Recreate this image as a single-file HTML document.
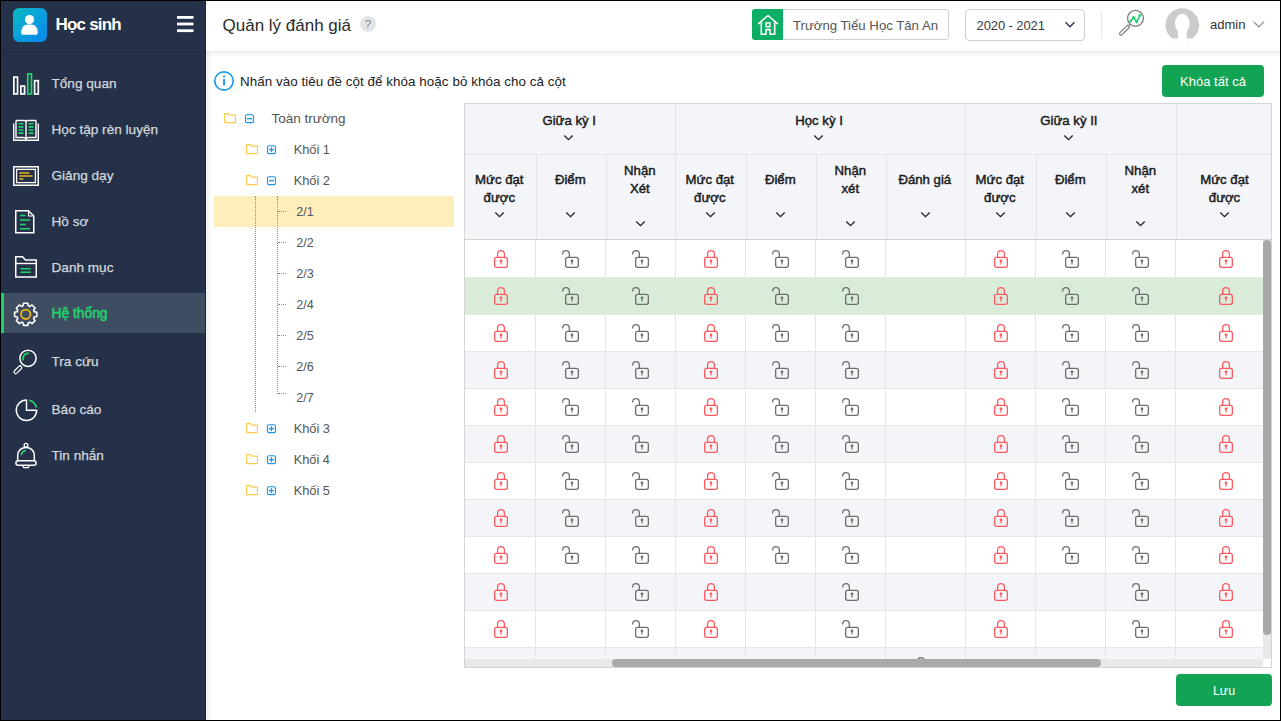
<!DOCTYPE html>
<html><head><meta charset="utf-8"><title>Quản lý đánh giá</title>
<style>
html,body{margin:0;padding:0;}
body{width:1281px;height:721px;background:#000;position:relative;overflow:hidden;font-family:"Liberation Sans", sans-serif;}
svg{display:block;overflow:visible;}
</style></head><body>
<div style="position:absolute;left:1px;top:1px;width:205px;height:719px;background:#243148;"></div>
<div style="position:absolute;left:205px;top:1px;width:1px;height:719px;background:#1b263a;"></div>
<div style="position:absolute;left:1px;top:51px;width:204px;height:2px;background:linear-gradient(#202c42,#243148);"></div>
<div style="position:absolute;left:13px;top:8px;width:34px;height:34px;border-radius:6px;background:linear-gradient(135deg,#0bb8bf 0%,#0a9ee0 55%,#0a85ea 100%);"></div>
<svg style="position:absolute;left:13px;top:8px;" width="34" height="34" viewBox="0 0 34 34"><circle cx="16.5" cy="11.6" r="4.6" fill="#fff"/><path d="M8.2 24.5 C8.2 19.5 11 16.8 14.5 16.6 L18.5 16.6 C22 16.8 24.8 19.5 24.8 24.5 C24.8 26.2 24 26.8 22.5 26.8 L10.5 26.8 C9 26.8 8.2 26.2 8.2 24.5 Z" fill="#fff"/></svg>
<div style="position:absolute;top:16.00px;font-size:17px;line-height:17px;color:#fff;font-weight:700;white-space:nowrap;letter-spacing:-0.8px;left:55.50px;">Học sinh</div>
<svg style="position:absolute;left:176px;top:15px;" width="19" height="19" viewBox="0 0 19 19"><rect x="1" y="1" width="16.5" height="2.8" fill="#fff"/><rect x="1" y="7.6" width="16.5" height="2.8" fill="#fff"/><rect x="1" y="14.3" width="16.5" height="2.8" fill="#fff"/></svg>
<div style="position:absolute;left:1px;top:293px;width:204px;height:40px;background:#3f4d63;"></div>
<div style="position:absolute;left:1px;top:293px;width:3px;height:40px;background:#1fd36b;"></div>
<div style="position:absolute;top:77.00px;font-size:13.6px;line-height:13.6px;color:#d3d7de;font-weight:400;white-space:nowrap;left:51.50px;-webkit-text-stroke:0.25px #d3d7de;">Tổng quan</div>
<div style="position:absolute;top:123.00px;font-size:13.6px;line-height:13.6px;color:#d3d7de;font-weight:400;white-space:nowrap;left:51.50px;-webkit-text-stroke:0.25px #d3d7de;">Học tập rèn luyện</div>
<div style="position:absolute;top:169.00px;font-size:13.6px;line-height:13.6px;color:#d3d7de;font-weight:400;white-space:nowrap;left:51.50px;-webkit-text-stroke:0.25px #d3d7de;">Giảng dạy</div>
<div style="position:absolute;top:215.00px;font-size:13.6px;line-height:13.6px;color:#d3d7de;font-weight:400;white-space:nowrap;left:51.50px;-webkit-text-stroke:0.25px #d3d7de;">Hồ sơ</div>
<div style="position:absolute;top:261.00px;font-size:13.6px;line-height:13.6px;color:#d3d7de;font-weight:400;white-space:nowrap;left:51.50px;-webkit-text-stroke:0.25px #d3d7de;">Danh mục</div>
<div style="position:absolute;top:307.00px;font-size:13.8px;line-height:13.8px;color:#22d36c;font-weight:400;white-space:nowrap;left:51.50px;-webkit-text-stroke:0.5px #22d36c;">Hệ thống</div>
<div style="position:absolute;top:355.00px;font-size:13.6px;line-height:13.6px;color:#d3d7de;font-weight:400;white-space:nowrap;left:51.50px;-webkit-text-stroke:0.25px #d3d7de;">Tra cứu</div>
<div style="position:absolute;top:403.00px;font-size:13.6px;line-height:13.6px;color:#d3d7de;font-weight:400;white-space:nowrap;left:51.50px;-webkit-text-stroke:0.25px #d3d7de;">Báo cáo</div>
<div style="position:absolute;top:449.00px;font-size:13.6px;line-height:13.6px;color:#d3d7de;font-weight:400;white-space:nowrap;left:51.50px;-webkit-text-stroke:0.25px #d3d7de;">Tin nhắn</div>
<svg style="position:absolute;left:12px;top:72px;" width="28" height="24" viewBox="0 0 28 24">
<rect x="1.85" y="5.1" width="3.7" height="16.85" fill="none" stroke="#fff" stroke-width="1.7"/>
<rect x="8.85" y="14.1" width="3.7" height="7.85" fill="none" stroke="#fff" stroke-width="1.7"/>
<rect x="15.75" y="1.9" width="3.7" height="20.05" fill="none" stroke="#1fd36b" stroke-width="1.7"/>
<rect x="22.6" y="8.7" width="3.7" height="13.25" fill="none" stroke="#fff" stroke-width="1.7"/></svg>
<svg style="position:absolute;left:12px;top:118px;" width="28" height="24" viewBox="0 0 28 24">
<path d="M4 2.5 H12.5 C13.5 2.5 14 3 14 4 V20 M24 2.5 H15.5 C14.5 2.5 14 3 14 4" fill="none" stroke="#fff" stroke-width="1.4"/>
<path d="M4 2.5 V19.5 H11 C12.5 19.5 13.5 20 14 21 C14.5 20 15.5 19.5 17 19.5 H24 V2.5" fill="none" stroke="#fff" stroke-width="1.4"/>
<path d="M1.7 5.5 V22.2 H26.3 V5.5" fill="none" stroke="#fff" stroke-width="1.4"/>
<path d="M6.5 5.8 H11.5 M6.5 8.9 H11.5 M6.5 12 H11.5 M6.5 15.1 H11.5 M16.5 5.8 H21.5 M16.5 8.9 H21.5 M16.5 12 H21.5 M16.5 15.1 H21.5" stroke="#1fd36b" stroke-width="1.6"/></svg>
<svg style="position:absolute;left:12px;top:165px;" width="28" height="22" viewBox="0 0 28 22">
<rect x="1.75" y="1.75" width="24.5" height="18.5" fill="none" stroke="#fff" stroke-width="1.5"/>
<rect x="4.6" y="4.4" width="18.8" height="13.2" fill="none" stroke="#fff" stroke-width="1.3"/>
<path d="M7.3 8 H17.4 M7.3 11 H20.6 M7.3 14 H11.4" stroke="#ebb318" stroke-width="1.7"/></svg>
<svg style="position:absolute;left:14px;top:209px;" width="22" height="26" viewBox="0 0 22 26">
<path d="M1.75 1.75 H14.5 L19.75 7 V23.75 H1.75 Z" fill="none" stroke="#fff" stroke-width="1.5"/>
<path d="M14.5 1.75 V7 H19.75" fill="none" stroke="#fff" stroke-width="1.2"/>
<path d="M6 6.4 H11.6 M6 11 H16 M6 15.4 H11.6 M6 19.75 H16" stroke="#1fd36b" stroke-width="1.5"/></svg>
<svg style="position:absolute;left:14px;top:255px;" width="24" height="24" viewBox="0 0 24 24">
<path d="M1.75 21.9 V1.75 H8.5 L11.5 5 H22.25 V21.9 Z" fill="none" stroke="#fff" stroke-width="1.5"/>
<path d="M1.75 8.5 H22.25" stroke="#fff" stroke-width="1.4"/>
<path d="M6.5 13.7 H16.8 M6.5 17.3 H16.8" stroke="#1fd36b" stroke-width="1.5"/></svg>
<svg style="position:absolute;left:12px;top:301px;" width="28" height="28" viewBox="0 0 28 28">
<path d="M11.02 4.81 L11.58 2.20 L15.82 2.20 L16.38 4.81 L17.80 5.40 L20.05 3.95 L23.05 6.95 L21.60 9.20 L22.19 10.62 L24.80 11.18 L24.80 15.42 L22.19 15.98 L21.60 17.40 L23.05 19.65 L20.05 22.65 L17.80 21.20 L16.38 21.79 L15.82 24.40 L11.58 24.40 L11.02 21.79 L9.60 21.20 L7.35 22.65 L4.35 19.65 L5.80 17.40 L5.21 15.98 L2.60 15.42 L2.60 11.18 L5.21 10.62 L5.80 9.20 L4.35 6.95 L7.35 3.95 L9.60 5.40 Z" fill="none" stroke="#fff" stroke-width="1.6" stroke-linejoin="round"/>
<circle cx="13.7" cy="13.3" r="4.7" fill="none" stroke="#f0b70f" stroke-width="1.8"/></svg>
<svg style="position:absolute;left:12px;top:346px;" width="28" height="30" viewBox="0 0 28 30">
<circle cx="16" cy="12.3" r="8.1" fill="none" stroke="#fff" stroke-width="1.5"/>
<path d="M11.43 14.33 A5 5 0 0 1 16.87 7.38" fill="none" stroke="#1fd36b" stroke-width="1.8"/>
<rect x="1.1" y="22.05" width="9.6" height="3.4" rx="1.7" transform="rotate(-45 5.9 23.75)" fill="none" stroke="#fff" stroke-width="1.2"/></svg>
<svg style="position:absolute;left:12px;top:396px;" width="28" height="28" viewBox="0 0 28 28">
<path d="M14.5 4 A10.2 10.2 0 1 0 24.7 14.2 H14.5 Z" fill="none" stroke="#fff" stroke-width="1.5" stroke-linejoin="round"/>
<path d="M17.2 4.3 A10.2 10.2 0 0 1 24.4 11.5" fill="none" stroke="#1fd36b" stroke-width="1.7"/></svg>
<svg style="position:absolute;left:12px;top:442px;" width="28" height="28" viewBox="0 0 28 28">
<circle cx="14" cy="3.2" r="1.9" fill="none" stroke="#fff" stroke-width="1.3"/>
<path d="M5.7 18.6 V13.5 C5.7 8.7 9.3 5.4 14 5.4 C18.7 5.4 22.3 8.7 22.3 13.5 V18.6" fill="none" stroke="#fff" stroke-width="1.5"/>
<rect x="3.9" y="18.7" width="20.2" height="4.5" rx="2.25" fill="none" stroke="#fff" stroke-width="1.5"/>
<path d="M11.2 23.4 V24.4 C11.2 25.1 11.6 25.6 12.3 25.6 H15.7 C16.4 25.6 16.8 25.1 16.8 24.4 V23.4" fill="none" stroke="#fff" stroke-width="1.3"/>
<path d="M9.3 13.2 A5.5 5.5 0 0 1 13.8 8.4" fill="none" stroke="#1fd36b" stroke-width="1.7"/></svg>
<div style="position:absolute;left:206px;top:1px;width:1074px;height:50px;background:#fff;"></div>
<div style="position:absolute;top:17.00px;font-size:17px;line-height:17px;color:#2b2b2b;font-weight:400;white-space:nowrap;left:222.50px;">Quản lý đánh giá</div>
<div style="position:absolute;left:360px;top:16px;width:16px;height:16px;border-radius:50%;background:#e4e4e4;"></div>
<div style="position:absolute;top:19.00px;font-size:11.5px;line-height:11.5px;color:#808080;font-weight:400;white-space:nowrap;left:268.00px;width:200px;text-align:center;">?</div>
<div style="position:absolute;left:752px;top:9px;width:195px;height:29px;border:1px solid #cfcfcf;border-radius:3px;background:#fff;"></div>
<div style="position:absolute;left:752px;top:9px;width:31px;height:31px;border-radius:3px 0 0 3px;background:#0bae64;"></div>
<svg style="position:absolute;left:757px;top:14px;" width="22" height="22" viewBox="0 0 22 22">
<path d="M1.6 9.6 L11 1.5 L20.4 9.6" fill="none" stroke="#fff" stroke-width="1.6" stroke-linejoin="round" stroke-linecap="round"/>
<path d="M4.3 7.6 V20.2 H9 V15.6 H13 V20.2 H17.7 V7.6" fill="none" stroke="#fff" stroke-width="1.6" stroke-linejoin="round"/>
<rect x="9.1" y="8.9" width="3.8" height="3.8" fill="none" stroke="#fff" stroke-width="1.5"/></svg>
<div style="position:absolute;top:19.00px;font-size:13.2px;line-height:13.2px;color:#555;font-weight:400;white-space:nowrap;left:793.00px;">Trường Tiểu Học Tân An</div>
<div style="position:absolute;left:965px;top:9px;width:118px;height:30px;border:1px solid #cfcfcf;border-radius:4px;background:#fff;"></div>
<div style="position:absolute;top:19.00px;font-size:13px;line-height:13px;color:#3a3a3a;font-weight:400;white-space:nowrap;letter-spacing:-0.1px;left:976.50px;">2020 - 2021</div>
<svg style="position:absolute;left:1064px;top:20px;" width="12" height="9" viewBox="0 0 12 9"><path d="M1.5 2.2 L6 6.7 L10.5 2.2" fill="none" stroke="#3b3a58" stroke-width="1.6"/></svg>
<div style="position:absolute;left:1101px;top:12px;width:1px;height:26px;background:#e6e6ef;"></div>
<svg style="position:absolute;left:1117px;top:7px;" width="30" height="30" viewBox="0 0 30 30">
<circle cx="18.5" cy="11.3" r="7.9" fill="none" stroke="#7b7b7b" stroke-width="1.3"/>
<path d="M13.2 17 L11.6 18.6" stroke="#7b7b7b" stroke-width="1.3"/>
<path d="M11.9 19.4 L10.6 18.1 L3 25.7 C2.4 26.3 2.4 27 3 27.5 L3.3 27.8 C3.8 28.3 4.5 28.3 5.1 27.7 L12.7 20.1 Z" fill="none" stroke="#7b7b7b" stroke-width="1.2" stroke-linejoin="round"/>
<path d="M13.7 14.3 L16.6 10.4 L19.7 15 L22.8 8.4" fill="none" stroke="#1fd36b" stroke-width="1.6"/>
<circle cx="13.7" cy="14.3" r="1.3" fill="#1fd36b"/><circle cx="16.6" cy="10.4" r="1.3" fill="#1fd36b"/><circle cx="19.7" cy="15" r="1.3" fill="#1fd36b"/><circle cx="22.8" cy="8.4" r="1.3" fill="#1fd36b"/></svg>
<svg style="position:absolute;left:1165px;top:8px;" width="35" height="35" viewBox="0 0 35 35">
<defs><clipPath id="avc"><circle cx="17.3" cy="17.1" r="16.8"/></clipPath></defs>
<circle cx="17.3" cy="17.1" r="16.6" fill="none" stroke="#f0f0f0" stroke-width="0.6"/>
<g clip-path="url(#avc)">
<rect x="0" y="0" width="35" height="35" fill="#cbcbcb"/>
<ellipse cx="17.3" cy="15.6" rx="7.3" ry="9.9" fill="#fff"/>
<rect x="12.9" y="20" width="8.8" height="16" fill="#fff"/>
<path d="M0 30.6 H35 V35 H0 Z" fill="#fff"/>
<path d="M4.7 27 Q5 30.6 8.8 30.6 H4.7 Z M29.9 27 Q29.6 30.6 25.8 30.6 H29.9 Z" fill="#fff"/>
</g></svg>
<div style="position:absolute;top:18.00px;font-size:13px;line-height:13px;color:#333;font-weight:400;white-space:nowrap;left:1210.00px;">admin</div>
<svg style="position:absolute;left:1252px;top:20px;" width="14" height="9" viewBox="0 0 14 9"><path d="M1.6 1.8 L6.8 6.8 L12 1.8" fill="none" stroke="#9a9a9a" stroke-width="1.2"/></svg>
<div style="position:absolute;left:206px;top:51px;width:1074px;height:669px;background:#fff;"></div>
<div style="position:absolute;left:206px;top:51px;width:1074px;height:6px;background:linear-gradient(rgba(0,0,0,0.075),rgba(0,0,0,0));"></div>
<div style="position:absolute;left:206px;top:51px;width:6px;height:669px;background:linear-gradient(90deg,rgba(0,0,0,0.06),rgba(0,0,0,0));"></div>
<svg style="position:absolute;left:213px;top:70px;" width="22" height="22" viewBox="0 0 22 22">
<circle cx="11" cy="11" r="9.2" fill="none" stroke="#1e9be9" stroke-width="1.7"/>
<rect x="10.1" y="9.2" width="1.9" height="6.2" fill="#1e9be9"/><circle cx="11.05" cy="6.6" r="1.1" fill="#1e9be9"/></svg>
<div style="position:absolute;top:75.00px;font-size:13.4px;line-height:13.4px;color:#222;font-weight:400;white-space:nowrap;letter-spacing:0.05px;left:240.00px;">Nhấn vào tiêu đề cột để khóa hoặc bỏ khóa cho cả cột</div>
<div style="position:absolute;left:1162px;top:65px;width:102px;height:32px;border-radius:4px;background:#12a454;"></div>
<div style="position:absolute;top:75.00px;font-size:13px;line-height:13px;color:#fff;font-weight:400;white-space:nowrap;left:1113.00px;width:200px;text-align:center;">Khóa tất cả</div>
<div style="position:absolute;left:1176px;top:674px;width:96px;height:32px;border-radius:4px;background:#12a454;"></div>
<div style="position:absolute;top:685.00px;font-size:12.4px;line-height:12.4px;color:#fff;font-weight:400;white-space:nowrap;left:1124.00px;width:200px;text-align:center;">Lưu</div>
<div style="position:absolute;left:214px;top:196px;width:240px;height:31px;background:#fdeebb;"></div>
<svg style="position:absolute;left:223px;top:112px;" width="15" height="13" viewBox="0 0 15 13"><path d="M1.5 2.1 C1.5 1.8 1.7 1.6 2 1.6 H5.4 L6.8 3.1 H12 C12.3 3.1 12.5 3.3 12.5 3.6 V10.1 C12.5 10.4 12.3 10.6 12 10.6 H2 C1.7 10.6 1.5 10.4 1.5 10.1 Z" fill="none" stroke="#fcc94f" stroke-width="1.1" stroke-linejoin="round"/></svg>
<svg style="position:absolute;left:244px;top:113px;" width="12" height="12" viewBox="0 0 12 12"><rect x="1.5" y="1.7" width="7.9" height="7.9" rx="1.3" fill="none" stroke="#1e96e6" stroke-width="1.15"/><path d="M2.95 5.65 H7.95" stroke="#1e96e6" stroke-width="1.35"/></svg>
<div style="position:absolute;top:112.00px;font-size:13.5px;line-height:13.5px;color:#555;font-weight:400;white-space:nowrap;left:271.40px;">Toàn trường</div>
<svg style="position:absolute;left:245px;top:143px;" width="15" height="13" viewBox="0 0 15 13"><path d="M1.5 2.1 C1.5 1.8 1.7 1.6 2 1.6 H5.4 L6.8 3.1 H12 C12.3 3.1 12.5 3.3 12.5 3.6 V10.1 C12.5 10.4 12.3 10.6 12 10.6 H2 C1.7 10.6 1.5 10.4 1.5 10.1 Z" fill="none" stroke="#fcc94f" stroke-width="1.1" stroke-linejoin="round"/></svg>
<svg style="position:absolute;left:266px;top:144px;" width="12" height="12" viewBox="0 0 12 12"><rect x="1.5" y="1.7" width="7.9" height="7.9" rx="1.3" fill="none" stroke="#1e96e6" stroke-width="1.15"/><path d="M2.95 5.65 H7.95" stroke="#1e96e6" stroke-width="1.35"/><path d="M5.45 3.15 V8.15" stroke="#1e96e6" stroke-width="1.35"/></svg>
<div style="position:absolute;top:144.00px;font-size:12.8px;line-height:12.8px;color:#555;font-weight:400;white-space:nowrap;left:293.70px;">Khối 1</div>
<svg style="position:absolute;left:245px;top:174px;" width="15" height="13" viewBox="0 0 15 13"><path d="M1.5 2.1 C1.5 1.8 1.7 1.6 2 1.6 H5.4 L6.8 3.1 H12 C12.3 3.1 12.5 3.3 12.5 3.6 V10.1 C12.5 10.4 12.3 10.6 12 10.6 H2 C1.7 10.6 1.5 10.4 1.5 10.1 Z" fill="none" stroke="#fcc94f" stroke-width="1.1" stroke-linejoin="round"/></svg>
<svg style="position:absolute;left:266px;top:175px;" width="12" height="12" viewBox="0 0 12 12"><rect x="1.5" y="1.7" width="7.9" height="7.9" rx="1.3" fill="none" stroke="#1e96e6" stroke-width="1.15"/><path d="M2.95 5.65 H7.95" stroke="#1e96e6" stroke-width="1.35"/></svg>
<div style="position:absolute;top:175.00px;font-size:12.8px;line-height:12.8px;color:#555;font-weight:400;white-space:nowrap;left:293.70px;">Khối 2</div>
<div style="position:absolute;top:206.00px;font-size:12.6px;line-height:12.6px;color:#555;font-weight:400;white-space:nowrap;left:296.30px;">2/1</div>
<div style="position:absolute;left:278px;top:211px;width:8px;height:0;border-top:1px dotted #8a8a8a;"></div>
<div style="position:absolute;top:237.00px;font-size:12.6px;line-height:12.6px;color:#555;font-weight:400;white-space:nowrap;left:296.30px;">2/2</div>
<div style="position:absolute;left:278px;top:242px;width:8px;height:0;border-top:1px dotted #8a8a8a;"></div>
<div style="position:absolute;top:268.00px;font-size:12.6px;line-height:12.6px;color:#555;font-weight:400;white-space:nowrap;left:296.30px;">2/3</div>
<div style="position:absolute;left:278px;top:273px;width:8px;height:0;border-top:1px dotted #8a8a8a;"></div>
<div style="position:absolute;top:299.00px;font-size:12.6px;line-height:12.6px;color:#555;font-weight:400;white-space:nowrap;left:296.30px;">2/4</div>
<div style="position:absolute;left:278px;top:304px;width:8px;height:0;border-top:1px dotted #8a8a8a;"></div>
<div style="position:absolute;top:330.00px;font-size:12.6px;line-height:12.6px;color:#555;font-weight:400;white-space:nowrap;left:296.30px;">2/5</div>
<div style="position:absolute;left:278px;top:335px;width:8px;height:0;border-top:1px dotted #8a8a8a;"></div>
<div style="position:absolute;top:361.00px;font-size:12.6px;line-height:12.6px;color:#555;font-weight:400;white-space:nowrap;left:296.30px;">2/6</div>
<div style="position:absolute;left:278px;top:366px;width:8px;height:0;border-top:1px dotted #8a8a8a;"></div>
<div style="position:absolute;top:392.00px;font-size:12.6px;line-height:12.6px;color:#555;font-weight:400;white-space:nowrap;left:296.30px;">2/7</div>
<div style="position:absolute;left:278px;top:393px;width:8px;height:0;border-top:1px dotted #8a8a8a;"></div>
<svg style="position:absolute;left:245px;top:422px;" width="15" height="13" viewBox="0 0 15 13"><path d="M1.5 2.1 C1.5 1.8 1.7 1.6 2 1.6 H5.4 L6.8 3.1 H12 C12.3 3.1 12.5 3.3 12.5 3.6 V10.1 C12.5 10.4 12.3 10.6 12 10.6 H2 C1.7 10.6 1.5 10.4 1.5 10.1 Z" fill="none" stroke="#fcc94f" stroke-width="1.1" stroke-linejoin="round"/></svg>
<svg style="position:absolute;left:266px;top:423px;" width="12" height="12" viewBox="0 0 12 12"><rect x="1.5" y="1.7" width="7.9" height="7.9" rx="1.3" fill="none" stroke="#1e96e6" stroke-width="1.15"/><path d="M2.95 5.65 H7.95" stroke="#1e96e6" stroke-width="1.35"/><path d="M5.45 3.15 V8.15" stroke="#1e96e6" stroke-width="1.35"/></svg>
<div style="position:absolute;top:423.00px;font-size:12.8px;line-height:12.8px;color:#555;font-weight:400;white-space:nowrap;left:293.70px;">Khối 3</div>
<svg style="position:absolute;left:245px;top:453px;" width="15" height="13" viewBox="0 0 15 13"><path d="M1.5 2.1 C1.5 1.8 1.7 1.6 2 1.6 H5.4 L6.8 3.1 H12 C12.3 3.1 12.5 3.3 12.5 3.6 V10.1 C12.5 10.4 12.3 10.6 12 10.6 H2 C1.7 10.6 1.5 10.4 1.5 10.1 Z" fill="none" stroke="#fcc94f" stroke-width="1.1" stroke-linejoin="round"/></svg>
<svg style="position:absolute;left:266px;top:454px;" width="12" height="12" viewBox="0 0 12 12"><rect x="1.5" y="1.7" width="7.9" height="7.9" rx="1.3" fill="none" stroke="#1e96e6" stroke-width="1.15"/><path d="M2.95 5.65 H7.95" stroke="#1e96e6" stroke-width="1.35"/><path d="M5.45 3.15 V8.15" stroke="#1e96e6" stroke-width="1.35"/></svg>
<div style="position:absolute;top:454.00px;font-size:12.8px;line-height:12.8px;color:#555;font-weight:400;white-space:nowrap;left:293.70px;">Khối 4</div>
<svg style="position:absolute;left:245px;top:484px;" width="15" height="13" viewBox="0 0 15 13"><path d="M1.5 2.1 C1.5 1.8 1.7 1.6 2 1.6 H5.4 L6.8 3.1 H12 C12.3 3.1 12.5 3.3 12.5 3.6 V10.1 C12.5 10.4 12.3 10.6 12 10.6 H2 C1.7 10.6 1.5 10.4 1.5 10.1 Z" fill="none" stroke="#fcc94f" stroke-width="1.1" stroke-linejoin="round"/></svg>
<svg style="position:absolute;left:266px;top:485px;" width="12" height="12" viewBox="0 0 12 12"><rect x="1.5" y="1.7" width="7.9" height="7.9" rx="1.3" fill="none" stroke="#1e96e6" stroke-width="1.15"/><path d="M2.95 5.65 H7.95" stroke="#1e96e6" stroke-width="1.35"/><path d="M5.45 3.15 V8.15" stroke="#1e96e6" stroke-width="1.35"/></svg>
<div style="position:absolute;top:485.00px;font-size:12.8px;line-height:12.8px;color:#555;font-weight:400;white-space:nowrap;left:293.70px;">Khối 5</div>
<div style="position:absolute;left:255px;top:196px;width:0;height:216px;border-left:1px dotted #8a8a8a;"></div>
<div style="position:absolute;left:277px;top:196px;width:0;height:198px;border-left:1px dotted #8a8a8a;"></div>
<div style="position:absolute;left:464px;top:103px;width:808px;height:565px;background:#fff;"></div>
<div style="position:absolute;left:465px;top:104px;width:806px;height:135px;background:#f3f5f9;"></div>
<div style="position:absolute;left:464px;top:103px;width:806px;height:563px;border:1px solid #d4d4d4;"></div>
<div style="position:absolute;left:465px;top:154px;width:806px;height:1px;background:#e3e4e8;"></div>
<div style="position:absolute;left:465px;top:239px;width:806px;height:1px;background:#d2d2d2;"></div>
<div style="position:absolute;left:675px;top:104px;width:1px;height:50px;background:#e3e4e8;"></div>
<div style="position:absolute;left:965px;top:104px;width:1px;height:50px;background:#e3e4e8;"></div>
<div style="position:absolute;left:1176px;top:104px;width:1px;height:50px;background:#e3e4e8;"></div>
<div style="position:absolute;left:536px;top:155px;width:1px;height:84px;background:#e3e4e8;"></div>
<div style="position:absolute;left:606px;top:155px;width:1px;height:84px;background:#e3e4e8;"></div>
<div style="position:absolute;left:675px;top:155px;width:1px;height:84px;background:#e3e4e8;"></div>
<div style="position:absolute;left:746px;top:155px;width:1px;height:84px;background:#e3e4e8;"></div>
<div style="position:absolute;left:816px;top:155px;width:1px;height:84px;background:#e3e4e8;"></div>
<div style="position:absolute;left:886px;top:155px;width:1px;height:84px;background:#e3e4e8;"></div>
<div style="position:absolute;left:965px;top:155px;width:1px;height:84px;background:#e3e4e8;"></div>
<div style="position:absolute;left:1036px;top:155px;width:1px;height:84px;background:#e3e4e8;"></div>
<div style="position:absolute;left:1106px;top:155px;width:1px;height:84px;background:#e3e4e8;"></div>
<div style="position:absolute;left:1176px;top:155px;width:1px;height:84px;background:#e3e4e8;"></div>
<div style="position:absolute;left:465px;top:240px;width:798px;height:37px;background:#fff;"></div>
<div style="position:absolute;left:465px;top:277px;width:798px;height:37px;background:#d9ecd9;"></div>
<div style="position:absolute;left:465px;top:277px;width:798px;height:1px;background:#e6e6e6;"></div>
<div style="position:absolute;left:465px;top:314px;width:798px;height:37px;background:#fff;"></div>
<div style="position:absolute;left:465px;top:314px;width:798px;height:1px;background:#e6e6e6;"></div>
<div style="position:absolute;left:465px;top:351px;width:798px;height:37px;background:#f4f5f9;"></div>
<div style="position:absolute;left:465px;top:351px;width:798px;height:1px;background:#e6e6e6;"></div>
<div style="position:absolute;left:465px;top:388px;width:798px;height:37px;background:#fff;"></div>
<div style="position:absolute;left:465px;top:388px;width:798px;height:1px;background:#e6e6e6;"></div>
<div style="position:absolute;left:465px;top:425px;width:798px;height:37px;background:#f4f5f9;"></div>
<div style="position:absolute;left:465px;top:425px;width:798px;height:1px;background:#e6e6e6;"></div>
<div style="position:absolute;left:465px;top:462px;width:798px;height:37px;background:#fff;"></div>
<div style="position:absolute;left:465px;top:462px;width:798px;height:1px;background:#e6e6e6;"></div>
<div style="position:absolute;left:465px;top:499px;width:798px;height:37px;background:#f4f5f9;"></div>
<div style="position:absolute;left:465px;top:499px;width:798px;height:1px;background:#e6e6e6;"></div>
<div style="position:absolute;left:465px;top:536px;width:798px;height:37px;background:#fff;"></div>
<div style="position:absolute;left:465px;top:536px;width:798px;height:1px;background:#e6e6e6;"></div>
<div style="position:absolute;left:465px;top:573px;width:798px;height:37px;background:#f4f5f9;"></div>
<div style="position:absolute;left:465px;top:573px;width:798px;height:1px;background:#e6e6e6;"></div>
<div style="position:absolute;left:465px;top:610px;width:798px;height:37px;background:#fff;"></div>
<div style="position:absolute;left:465px;top:610px;width:798px;height:1px;background:#e6e6e6;"></div>
<div style="position:absolute;left:465px;top:647px;width:798px;height:12px;background:#f4f5f9;"></div>
<div style="position:absolute;left:465px;top:647px;width:798px;height:1px;background:#e6e6e6;"></div>
<div style="position:absolute;left:535px;top:240px;width:1px;height:419px;background:#e6e6e6;"></div>
<div style="position:absolute;left:605px;top:240px;width:1px;height:419px;background:#e6e6e6;"></div>
<div style="position:absolute;left:675px;top:240px;width:1px;height:419px;background:#e6e6e6;"></div>
<div style="position:absolute;left:745px;top:240px;width:1px;height:419px;background:#e6e6e6;"></div>
<div style="position:absolute;left:815px;top:240px;width:1px;height:419px;background:#e6e6e6;"></div>
<div style="position:absolute;left:885px;top:240px;width:1px;height:419px;background:#e6e6e6;"></div>
<div style="position:absolute;left:965px;top:240px;width:1px;height:419px;background:#e6e6e6;"></div>
<div style="position:absolute;left:1035px;top:240px;width:1px;height:419px;background:#e6e6e6;"></div>
<div style="position:absolute;left:1105px;top:240px;width:1px;height:419px;background:#e6e6e6;"></div>
<div style="position:absolute;left:1175px;top:240px;width:1px;height:419px;background:#e6e6e6;"></div>
<svg style="position:absolute;left:491px;top:250px;" width="17" height="18" viewBox="0 0 17 18"><rect x="3.65" y="7.35" width="12.7" height="10" rx="2" fill="none" stroke="#ff5a5f" stroke-width="1.3"/>
<path d="M6.6 7.35 V4 A3.4 3.4 0 0 1 13.4 4 V7.35" fill="none" stroke="#ff5a5f" stroke-width="1.3"/>
<path d="M10 9.6 C10.8 9.6 11.35 10.15 11.35 10.9 C11.35 11.4 11.1 11.8 10.6 12 V14.4 H9.4 V12 C8.9 11.8 8.65 11.4 8.65 10.9 C8.65 10.15 9.2 9.6 10 9.6 Z" fill="#ff5a5f"/></svg>
<svg style="position:absolute;left:562px;top:250px;" width="17" height="18" viewBox="0 0 17 18"><rect x="3.65" y="7.35" width="12.7" height="10" rx="2" fill="none" stroke="#6e6e6e" stroke-width="1.3"/>
<path d="M0.65 4.6 V4 A3.35 3.35 0 0 1 7.35 4 V7.35" fill="none" stroke="#6e6e6e" stroke-width="1.3"/>
<path d="M10 9.6 C10.8 9.6 11.35 10.15 11.35 10.9 C11.35 11.4 11.1 11.8 10.6 12 V14.4 H9.4 V12 C8.9 11.8 8.65 11.4 8.65 10.9 C8.65 10.15 9.2 9.6 10 9.6 Z" fill="#6e6e6e"/></svg>
<svg style="position:absolute;left:632px;top:250px;" width="17" height="18" viewBox="0 0 17 18"><rect x="3.65" y="7.35" width="12.7" height="10" rx="2" fill="none" stroke="#6e6e6e" stroke-width="1.3"/>
<path d="M0.65 4.6 V4 A3.35 3.35 0 0 1 7.35 4 V7.35" fill="none" stroke="#6e6e6e" stroke-width="1.3"/>
<path d="M10 9.6 C10.8 9.6 11.35 10.15 11.35 10.9 C11.35 11.4 11.1 11.8 10.6 12 V14.4 H9.4 V12 C8.9 11.8 8.65 11.4 8.65 10.9 C8.65 10.15 9.2 9.6 10 9.6 Z" fill="#6e6e6e"/></svg>
<svg style="position:absolute;left:701px;top:250px;" width="17" height="18" viewBox="0 0 17 18"><rect x="3.65" y="7.35" width="12.7" height="10" rx="2" fill="none" stroke="#ff5a5f" stroke-width="1.3"/>
<path d="M6.6 7.35 V4 A3.4 3.4 0 0 1 13.4 4 V7.35" fill="none" stroke="#ff5a5f" stroke-width="1.3"/>
<path d="M10 9.6 C10.8 9.6 11.35 10.15 11.35 10.9 C11.35 11.4 11.1 11.8 10.6 12 V14.4 H9.4 V12 C8.9 11.8 8.65 11.4 8.65 10.9 C8.65 10.15 9.2 9.6 10 9.6 Z" fill="#ff5a5f"/></svg>
<svg style="position:absolute;left:772px;top:250px;" width="17" height="18" viewBox="0 0 17 18"><rect x="3.65" y="7.35" width="12.7" height="10" rx="2" fill="none" stroke="#6e6e6e" stroke-width="1.3"/>
<path d="M0.65 4.6 V4 A3.35 3.35 0 0 1 7.35 4 V7.35" fill="none" stroke="#6e6e6e" stroke-width="1.3"/>
<path d="M10 9.6 C10.8 9.6 11.35 10.15 11.35 10.9 C11.35 11.4 11.1 11.8 10.6 12 V14.4 H9.4 V12 C8.9 11.8 8.65 11.4 8.65 10.9 C8.65 10.15 9.2 9.6 10 9.6 Z" fill="#6e6e6e"/></svg>
<svg style="position:absolute;left:842px;top:250px;" width="17" height="18" viewBox="0 0 17 18"><rect x="3.65" y="7.35" width="12.7" height="10" rx="2" fill="none" stroke="#6e6e6e" stroke-width="1.3"/>
<path d="M0.65 4.6 V4 A3.35 3.35 0 0 1 7.35 4 V7.35" fill="none" stroke="#6e6e6e" stroke-width="1.3"/>
<path d="M10 9.6 C10.8 9.6 11.35 10.15 11.35 10.9 C11.35 11.4 11.1 11.8 10.6 12 V14.4 H9.4 V12 C8.9 11.8 8.65 11.4 8.65 10.9 C8.65 10.15 9.2 9.6 10 9.6 Z" fill="#6e6e6e"/></svg>
<svg style="position:absolute;left:991px;top:250px;" width="17" height="18" viewBox="0 0 17 18"><rect x="3.65" y="7.35" width="12.7" height="10" rx="2" fill="none" stroke="#ff5a5f" stroke-width="1.3"/>
<path d="M6.6 7.35 V4 A3.4 3.4 0 0 1 13.4 4 V7.35" fill="none" stroke="#ff5a5f" stroke-width="1.3"/>
<path d="M10 9.6 C10.8 9.6 11.35 10.15 11.35 10.9 C11.35 11.4 11.1 11.8 10.6 12 V14.4 H9.4 V12 C8.9 11.8 8.65 11.4 8.65 10.9 C8.65 10.15 9.2 9.6 10 9.6 Z" fill="#ff5a5f"/></svg>
<svg style="position:absolute;left:1062px;top:250px;" width="17" height="18" viewBox="0 0 17 18"><rect x="3.65" y="7.35" width="12.7" height="10" rx="2" fill="none" stroke="#6e6e6e" stroke-width="1.3"/>
<path d="M0.65 4.6 V4 A3.35 3.35 0 0 1 7.35 4 V7.35" fill="none" stroke="#6e6e6e" stroke-width="1.3"/>
<path d="M10 9.6 C10.8 9.6 11.35 10.15 11.35 10.9 C11.35 11.4 11.1 11.8 10.6 12 V14.4 H9.4 V12 C8.9 11.8 8.65 11.4 8.65 10.9 C8.65 10.15 9.2 9.6 10 9.6 Z" fill="#6e6e6e"/></svg>
<svg style="position:absolute;left:1132px;top:250px;" width="17" height="18" viewBox="0 0 17 18"><rect x="3.65" y="7.35" width="12.7" height="10" rx="2" fill="none" stroke="#6e6e6e" stroke-width="1.3"/>
<path d="M0.65 4.6 V4 A3.35 3.35 0 0 1 7.35 4 V7.35" fill="none" stroke="#6e6e6e" stroke-width="1.3"/>
<path d="M10 9.6 C10.8 9.6 11.35 10.15 11.35 10.9 C11.35 11.4 11.1 11.8 10.6 12 V14.4 H9.4 V12 C8.9 11.8 8.65 11.4 8.65 10.9 C8.65 10.15 9.2 9.6 10 9.6 Z" fill="#6e6e6e"/></svg>
<svg style="position:absolute;left:1216px;top:250px;" width="17" height="18" viewBox="0 0 17 18"><rect x="3.65" y="7.35" width="12.7" height="10" rx="2" fill="none" stroke="#ff5a5f" stroke-width="1.3"/>
<path d="M6.6 7.35 V4 A3.4 3.4 0 0 1 13.4 4 V7.35" fill="none" stroke="#ff5a5f" stroke-width="1.3"/>
<path d="M10 9.6 C10.8 9.6 11.35 10.15 11.35 10.9 C11.35 11.4 11.1 11.8 10.6 12 V14.4 H9.4 V12 C8.9 11.8 8.65 11.4 8.65 10.9 C8.65 10.15 9.2 9.6 10 9.6 Z" fill="#ff5a5f"/></svg>
<svg style="position:absolute;left:491px;top:287px;" width="17" height="18" viewBox="0 0 17 18"><rect x="3.65" y="7.35" width="12.7" height="10" rx="2" fill="none" stroke="#ff5a5f" stroke-width="1.3"/>
<path d="M6.6 7.35 V4 A3.4 3.4 0 0 1 13.4 4 V7.35" fill="none" stroke="#ff5a5f" stroke-width="1.3"/>
<path d="M10 9.6 C10.8 9.6 11.35 10.15 11.35 10.9 C11.35 11.4 11.1 11.8 10.6 12 V14.4 H9.4 V12 C8.9 11.8 8.65 11.4 8.65 10.9 C8.65 10.15 9.2 9.6 10 9.6 Z" fill="#ff5a5f"/></svg>
<svg style="position:absolute;left:562px;top:287px;" width="17" height="18" viewBox="0 0 17 18"><rect x="3.65" y="7.35" width="12.7" height="10" rx="2" fill="none" stroke="#6e6e6e" stroke-width="1.3"/>
<path d="M0.65 4.6 V4 A3.35 3.35 0 0 1 7.35 4 V7.35" fill="none" stroke="#6e6e6e" stroke-width="1.3"/>
<path d="M10 9.6 C10.8 9.6 11.35 10.15 11.35 10.9 C11.35 11.4 11.1 11.8 10.6 12 V14.4 H9.4 V12 C8.9 11.8 8.65 11.4 8.65 10.9 C8.65 10.15 9.2 9.6 10 9.6 Z" fill="#6e6e6e"/></svg>
<svg style="position:absolute;left:632px;top:287px;" width="17" height="18" viewBox="0 0 17 18"><rect x="3.65" y="7.35" width="12.7" height="10" rx="2" fill="none" stroke="#6e6e6e" stroke-width="1.3"/>
<path d="M0.65 4.6 V4 A3.35 3.35 0 0 1 7.35 4 V7.35" fill="none" stroke="#6e6e6e" stroke-width="1.3"/>
<path d="M10 9.6 C10.8 9.6 11.35 10.15 11.35 10.9 C11.35 11.4 11.1 11.8 10.6 12 V14.4 H9.4 V12 C8.9 11.8 8.65 11.4 8.65 10.9 C8.65 10.15 9.2 9.6 10 9.6 Z" fill="#6e6e6e"/></svg>
<svg style="position:absolute;left:701px;top:287px;" width="17" height="18" viewBox="0 0 17 18"><rect x="3.65" y="7.35" width="12.7" height="10" rx="2" fill="none" stroke="#ff5a5f" stroke-width="1.3"/>
<path d="M6.6 7.35 V4 A3.4 3.4 0 0 1 13.4 4 V7.35" fill="none" stroke="#ff5a5f" stroke-width="1.3"/>
<path d="M10 9.6 C10.8 9.6 11.35 10.15 11.35 10.9 C11.35 11.4 11.1 11.8 10.6 12 V14.4 H9.4 V12 C8.9 11.8 8.65 11.4 8.65 10.9 C8.65 10.15 9.2 9.6 10 9.6 Z" fill="#ff5a5f"/></svg>
<svg style="position:absolute;left:772px;top:287px;" width="17" height="18" viewBox="0 0 17 18"><rect x="3.65" y="7.35" width="12.7" height="10" rx="2" fill="none" stroke="#6e6e6e" stroke-width="1.3"/>
<path d="M0.65 4.6 V4 A3.35 3.35 0 0 1 7.35 4 V7.35" fill="none" stroke="#6e6e6e" stroke-width="1.3"/>
<path d="M10 9.6 C10.8 9.6 11.35 10.15 11.35 10.9 C11.35 11.4 11.1 11.8 10.6 12 V14.4 H9.4 V12 C8.9 11.8 8.65 11.4 8.65 10.9 C8.65 10.15 9.2 9.6 10 9.6 Z" fill="#6e6e6e"/></svg>
<svg style="position:absolute;left:842px;top:287px;" width="17" height="18" viewBox="0 0 17 18"><rect x="3.65" y="7.35" width="12.7" height="10" rx="2" fill="none" stroke="#6e6e6e" stroke-width="1.3"/>
<path d="M0.65 4.6 V4 A3.35 3.35 0 0 1 7.35 4 V7.35" fill="none" stroke="#6e6e6e" stroke-width="1.3"/>
<path d="M10 9.6 C10.8 9.6 11.35 10.15 11.35 10.9 C11.35 11.4 11.1 11.8 10.6 12 V14.4 H9.4 V12 C8.9 11.8 8.65 11.4 8.65 10.9 C8.65 10.15 9.2 9.6 10 9.6 Z" fill="#6e6e6e"/></svg>
<svg style="position:absolute;left:991px;top:287px;" width="17" height="18" viewBox="0 0 17 18"><rect x="3.65" y="7.35" width="12.7" height="10" rx="2" fill="none" stroke="#ff5a5f" stroke-width="1.3"/>
<path d="M6.6 7.35 V4 A3.4 3.4 0 0 1 13.4 4 V7.35" fill="none" stroke="#ff5a5f" stroke-width="1.3"/>
<path d="M10 9.6 C10.8 9.6 11.35 10.15 11.35 10.9 C11.35 11.4 11.1 11.8 10.6 12 V14.4 H9.4 V12 C8.9 11.8 8.65 11.4 8.65 10.9 C8.65 10.15 9.2 9.6 10 9.6 Z" fill="#ff5a5f"/></svg>
<svg style="position:absolute;left:1062px;top:287px;" width="17" height="18" viewBox="0 0 17 18"><rect x="3.65" y="7.35" width="12.7" height="10" rx="2" fill="none" stroke="#6e6e6e" stroke-width="1.3"/>
<path d="M0.65 4.6 V4 A3.35 3.35 0 0 1 7.35 4 V7.35" fill="none" stroke="#6e6e6e" stroke-width="1.3"/>
<path d="M10 9.6 C10.8 9.6 11.35 10.15 11.35 10.9 C11.35 11.4 11.1 11.8 10.6 12 V14.4 H9.4 V12 C8.9 11.8 8.65 11.4 8.65 10.9 C8.65 10.15 9.2 9.6 10 9.6 Z" fill="#6e6e6e"/></svg>
<svg style="position:absolute;left:1132px;top:287px;" width="17" height="18" viewBox="0 0 17 18"><rect x="3.65" y="7.35" width="12.7" height="10" rx="2" fill="none" stroke="#6e6e6e" stroke-width="1.3"/>
<path d="M0.65 4.6 V4 A3.35 3.35 0 0 1 7.35 4 V7.35" fill="none" stroke="#6e6e6e" stroke-width="1.3"/>
<path d="M10 9.6 C10.8 9.6 11.35 10.15 11.35 10.9 C11.35 11.4 11.1 11.8 10.6 12 V14.4 H9.4 V12 C8.9 11.8 8.65 11.4 8.65 10.9 C8.65 10.15 9.2 9.6 10 9.6 Z" fill="#6e6e6e"/></svg>
<svg style="position:absolute;left:1216px;top:287px;" width="17" height="18" viewBox="0 0 17 18"><rect x="3.65" y="7.35" width="12.7" height="10" rx="2" fill="none" stroke="#ff5a5f" stroke-width="1.3"/>
<path d="M6.6 7.35 V4 A3.4 3.4 0 0 1 13.4 4 V7.35" fill="none" stroke="#ff5a5f" stroke-width="1.3"/>
<path d="M10 9.6 C10.8 9.6 11.35 10.15 11.35 10.9 C11.35 11.4 11.1 11.8 10.6 12 V14.4 H9.4 V12 C8.9 11.8 8.65 11.4 8.65 10.9 C8.65 10.15 9.2 9.6 10 9.6 Z" fill="#ff5a5f"/></svg>
<svg style="position:absolute;left:491px;top:324px;" width="17" height="18" viewBox="0 0 17 18"><rect x="3.65" y="7.35" width="12.7" height="10" rx="2" fill="none" stroke="#ff5a5f" stroke-width="1.3"/>
<path d="M6.6 7.35 V4 A3.4 3.4 0 0 1 13.4 4 V7.35" fill="none" stroke="#ff5a5f" stroke-width="1.3"/>
<path d="M10 9.6 C10.8 9.6 11.35 10.15 11.35 10.9 C11.35 11.4 11.1 11.8 10.6 12 V14.4 H9.4 V12 C8.9 11.8 8.65 11.4 8.65 10.9 C8.65 10.15 9.2 9.6 10 9.6 Z" fill="#ff5a5f"/></svg>
<svg style="position:absolute;left:562px;top:324px;" width="17" height="18" viewBox="0 0 17 18"><rect x="3.65" y="7.35" width="12.7" height="10" rx="2" fill="none" stroke="#6e6e6e" stroke-width="1.3"/>
<path d="M0.65 4.6 V4 A3.35 3.35 0 0 1 7.35 4 V7.35" fill="none" stroke="#6e6e6e" stroke-width="1.3"/>
<path d="M10 9.6 C10.8 9.6 11.35 10.15 11.35 10.9 C11.35 11.4 11.1 11.8 10.6 12 V14.4 H9.4 V12 C8.9 11.8 8.65 11.4 8.65 10.9 C8.65 10.15 9.2 9.6 10 9.6 Z" fill="#6e6e6e"/></svg>
<svg style="position:absolute;left:632px;top:324px;" width="17" height="18" viewBox="0 0 17 18"><rect x="3.65" y="7.35" width="12.7" height="10" rx="2" fill="none" stroke="#6e6e6e" stroke-width="1.3"/>
<path d="M0.65 4.6 V4 A3.35 3.35 0 0 1 7.35 4 V7.35" fill="none" stroke="#6e6e6e" stroke-width="1.3"/>
<path d="M10 9.6 C10.8 9.6 11.35 10.15 11.35 10.9 C11.35 11.4 11.1 11.8 10.6 12 V14.4 H9.4 V12 C8.9 11.8 8.65 11.4 8.65 10.9 C8.65 10.15 9.2 9.6 10 9.6 Z" fill="#6e6e6e"/></svg>
<svg style="position:absolute;left:701px;top:324px;" width="17" height="18" viewBox="0 0 17 18"><rect x="3.65" y="7.35" width="12.7" height="10" rx="2" fill="none" stroke="#ff5a5f" stroke-width="1.3"/>
<path d="M6.6 7.35 V4 A3.4 3.4 0 0 1 13.4 4 V7.35" fill="none" stroke="#ff5a5f" stroke-width="1.3"/>
<path d="M10 9.6 C10.8 9.6 11.35 10.15 11.35 10.9 C11.35 11.4 11.1 11.8 10.6 12 V14.4 H9.4 V12 C8.9 11.8 8.65 11.4 8.65 10.9 C8.65 10.15 9.2 9.6 10 9.6 Z" fill="#ff5a5f"/></svg>
<svg style="position:absolute;left:772px;top:324px;" width="17" height="18" viewBox="0 0 17 18"><rect x="3.65" y="7.35" width="12.7" height="10" rx="2" fill="none" stroke="#6e6e6e" stroke-width="1.3"/>
<path d="M0.65 4.6 V4 A3.35 3.35 0 0 1 7.35 4 V7.35" fill="none" stroke="#6e6e6e" stroke-width="1.3"/>
<path d="M10 9.6 C10.8 9.6 11.35 10.15 11.35 10.9 C11.35 11.4 11.1 11.8 10.6 12 V14.4 H9.4 V12 C8.9 11.8 8.65 11.4 8.65 10.9 C8.65 10.15 9.2 9.6 10 9.6 Z" fill="#6e6e6e"/></svg>
<svg style="position:absolute;left:842px;top:324px;" width="17" height="18" viewBox="0 0 17 18"><rect x="3.65" y="7.35" width="12.7" height="10" rx="2" fill="none" stroke="#6e6e6e" stroke-width="1.3"/>
<path d="M0.65 4.6 V4 A3.35 3.35 0 0 1 7.35 4 V7.35" fill="none" stroke="#6e6e6e" stroke-width="1.3"/>
<path d="M10 9.6 C10.8 9.6 11.35 10.15 11.35 10.9 C11.35 11.4 11.1 11.8 10.6 12 V14.4 H9.4 V12 C8.9 11.8 8.65 11.4 8.65 10.9 C8.65 10.15 9.2 9.6 10 9.6 Z" fill="#6e6e6e"/></svg>
<svg style="position:absolute;left:991px;top:324px;" width="17" height="18" viewBox="0 0 17 18"><rect x="3.65" y="7.35" width="12.7" height="10" rx="2" fill="none" stroke="#ff5a5f" stroke-width="1.3"/>
<path d="M6.6 7.35 V4 A3.4 3.4 0 0 1 13.4 4 V7.35" fill="none" stroke="#ff5a5f" stroke-width="1.3"/>
<path d="M10 9.6 C10.8 9.6 11.35 10.15 11.35 10.9 C11.35 11.4 11.1 11.8 10.6 12 V14.4 H9.4 V12 C8.9 11.8 8.65 11.4 8.65 10.9 C8.65 10.15 9.2 9.6 10 9.6 Z" fill="#ff5a5f"/></svg>
<svg style="position:absolute;left:1062px;top:324px;" width="17" height="18" viewBox="0 0 17 18"><rect x="3.65" y="7.35" width="12.7" height="10" rx="2" fill="none" stroke="#6e6e6e" stroke-width="1.3"/>
<path d="M0.65 4.6 V4 A3.35 3.35 0 0 1 7.35 4 V7.35" fill="none" stroke="#6e6e6e" stroke-width="1.3"/>
<path d="M10 9.6 C10.8 9.6 11.35 10.15 11.35 10.9 C11.35 11.4 11.1 11.8 10.6 12 V14.4 H9.4 V12 C8.9 11.8 8.65 11.4 8.65 10.9 C8.65 10.15 9.2 9.6 10 9.6 Z" fill="#6e6e6e"/></svg>
<svg style="position:absolute;left:1132px;top:324px;" width="17" height="18" viewBox="0 0 17 18"><rect x="3.65" y="7.35" width="12.7" height="10" rx="2" fill="none" stroke="#6e6e6e" stroke-width="1.3"/>
<path d="M0.65 4.6 V4 A3.35 3.35 0 0 1 7.35 4 V7.35" fill="none" stroke="#6e6e6e" stroke-width="1.3"/>
<path d="M10 9.6 C10.8 9.6 11.35 10.15 11.35 10.9 C11.35 11.4 11.1 11.8 10.6 12 V14.4 H9.4 V12 C8.9 11.8 8.65 11.4 8.65 10.9 C8.65 10.15 9.2 9.6 10 9.6 Z" fill="#6e6e6e"/></svg>
<svg style="position:absolute;left:1216px;top:324px;" width="17" height="18" viewBox="0 0 17 18"><rect x="3.65" y="7.35" width="12.7" height="10" rx="2" fill="none" stroke="#ff5a5f" stroke-width="1.3"/>
<path d="M6.6 7.35 V4 A3.4 3.4 0 0 1 13.4 4 V7.35" fill="none" stroke="#ff5a5f" stroke-width="1.3"/>
<path d="M10 9.6 C10.8 9.6 11.35 10.15 11.35 10.9 C11.35 11.4 11.1 11.8 10.6 12 V14.4 H9.4 V12 C8.9 11.8 8.65 11.4 8.65 10.9 C8.65 10.15 9.2 9.6 10 9.6 Z" fill="#ff5a5f"/></svg>
<svg style="position:absolute;left:491px;top:361px;" width="17" height="18" viewBox="0 0 17 18"><rect x="3.65" y="7.35" width="12.7" height="10" rx="2" fill="none" stroke="#ff5a5f" stroke-width="1.3"/>
<path d="M6.6 7.35 V4 A3.4 3.4 0 0 1 13.4 4 V7.35" fill="none" stroke="#ff5a5f" stroke-width="1.3"/>
<path d="M10 9.6 C10.8 9.6 11.35 10.15 11.35 10.9 C11.35 11.4 11.1 11.8 10.6 12 V14.4 H9.4 V12 C8.9 11.8 8.65 11.4 8.65 10.9 C8.65 10.15 9.2 9.6 10 9.6 Z" fill="#ff5a5f"/></svg>
<svg style="position:absolute;left:562px;top:361px;" width="17" height="18" viewBox="0 0 17 18"><rect x="3.65" y="7.35" width="12.7" height="10" rx="2" fill="none" stroke="#6e6e6e" stroke-width="1.3"/>
<path d="M0.65 4.6 V4 A3.35 3.35 0 0 1 7.35 4 V7.35" fill="none" stroke="#6e6e6e" stroke-width="1.3"/>
<path d="M10 9.6 C10.8 9.6 11.35 10.15 11.35 10.9 C11.35 11.4 11.1 11.8 10.6 12 V14.4 H9.4 V12 C8.9 11.8 8.65 11.4 8.65 10.9 C8.65 10.15 9.2 9.6 10 9.6 Z" fill="#6e6e6e"/></svg>
<svg style="position:absolute;left:632px;top:361px;" width="17" height="18" viewBox="0 0 17 18"><rect x="3.65" y="7.35" width="12.7" height="10" rx="2" fill="none" stroke="#6e6e6e" stroke-width="1.3"/>
<path d="M0.65 4.6 V4 A3.35 3.35 0 0 1 7.35 4 V7.35" fill="none" stroke="#6e6e6e" stroke-width="1.3"/>
<path d="M10 9.6 C10.8 9.6 11.35 10.15 11.35 10.9 C11.35 11.4 11.1 11.8 10.6 12 V14.4 H9.4 V12 C8.9 11.8 8.65 11.4 8.65 10.9 C8.65 10.15 9.2 9.6 10 9.6 Z" fill="#6e6e6e"/></svg>
<svg style="position:absolute;left:701px;top:361px;" width="17" height="18" viewBox="0 0 17 18"><rect x="3.65" y="7.35" width="12.7" height="10" rx="2" fill="none" stroke="#ff5a5f" stroke-width="1.3"/>
<path d="M6.6 7.35 V4 A3.4 3.4 0 0 1 13.4 4 V7.35" fill="none" stroke="#ff5a5f" stroke-width="1.3"/>
<path d="M10 9.6 C10.8 9.6 11.35 10.15 11.35 10.9 C11.35 11.4 11.1 11.8 10.6 12 V14.4 H9.4 V12 C8.9 11.8 8.65 11.4 8.65 10.9 C8.65 10.15 9.2 9.6 10 9.6 Z" fill="#ff5a5f"/></svg>
<svg style="position:absolute;left:772px;top:361px;" width="17" height="18" viewBox="0 0 17 18"><rect x="3.65" y="7.35" width="12.7" height="10" rx="2" fill="none" stroke="#6e6e6e" stroke-width="1.3"/>
<path d="M0.65 4.6 V4 A3.35 3.35 0 0 1 7.35 4 V7.35" fill="none" stroke="#6e6e6e" stroke-width="1.3"/>
<path d="M10 9.6 C10.8 9.6 11.35 10.15 11.35 10.9 C11.35 11.4 11.1 11.8 10.6 12 V14.4 H9.4 V12 C8.9 11.8 8.65 11.4 8.65 10.9 C8.65 10.15 9.2 9.6 10 9.6 Z" fill="#6e6e6e"/></svg>
<svg style="position:absolute;left:842px;top:361px;" width="17" height="18" viewBox="0 0 17 18"><rect x="3.65" y="7.35" width="12.7" height="10" rx="2" fill="none" stroke="#6e6e6e" stroke-width="1.3"/>
<path d="M0.65 4.6 V4 A3.35 3.35 0 0 1 7.35 4 V7.35" fill="none" stroke="#6e6e6e" stroke-width="1.3"/>
<path d="M10 9.6 C10.8 9.6 11.35 10.15 11.35 10.9 C11.35 11.4 11.1 11.8 10.6 12 V14.4 H9.4 V12 C8.9 11.8 8.65 11.4 8.65 10.9 C8.65 10.15 9.2 9.6 10 9.6 Z" fill="#6e6e6e"/></svg>
<svg style="position:absolute;left:991px;top:361px;" width="17" height="18" viewBox="0 0 17 18"><rect x="3.65" y="7.35" width="12.7" height="10" rx="2" fill="none" stroke="#ff5a5f" stroke-width="1.3"/>
<path d="M6.6 7.35 V4 A3.4 3.4 0 0 1 13.4 4 V7.35" fill="none" stroke="#ff5a5f" stroke-width="1.3"/>
<path d="M10 9.6 C10.8 9.6 11.35 10.15 11.35 10.9 C11.35 11.4 11.1 11.8 10.6 12 V14.4 H9.4 V12 C8.9 11.8 8.65 11.4 8.65 10.9 C8.65 10.15 9.2 9.6 10 9.6 Z" fill="#ff5a5f"/></svg>
<svg style="position:absolute;left:1062px;top:361px;" width="17" height="18" viewBox="0 0 17 18"><rect x="3.65" y="7.35" width="12.7" height="10" rx="2" fill="none" stroke="#6e6e6e" stroke-width="1.3"/>
<path d="M0.65 4.6 V4 A3.35 3.35 0 0 1 7.35 4 V7.35" fill="none" stroke="#6e6e6e" stroke-width="1.3"/>
<path d="M10 9.6 C10.8 9.6 11.35 10.15 11.35 10.9 C11.35 11.4 11.1 11.8 10.6 12 V14.4 H9.4 V12 C8.9 11.8 8.65 11.4 8.65 10.9 C8.65 10.15 9.2 9.6 10 9.6 Z" fill="#6e6e6e"/></svg>
<svg style="position:absolute;left:1132px;top:361px;" width="17" height="18" viewBox="0 0 17 18"><rect x="3.65" y="7.35" width="12.7" height="10" rx="2" fill="none" stroke="#6e6e6e" stroke-width="1.3"/>
<path d="M0.65 4.6 V4 A3.35 3.35 0 0 1 7.35 4 V7.35" fill="none" stroke="#6e6e6e" stroke-width="1.3"/>
<path d="M10 9.6 C10.8 9.6 11.35 10.15 11.35 10.9 C11.35 11.4 11.1 11.8 10.6 12 V14.4 H9.4 V12 C8.9 11.8 8.65 11.4 8.65 10.9 C8.65 10.15 9.2 9.6 10 9.6 Z" fill="#6e6e6e"/></svg>
<svg style="position:absolute;left:1216px;top:361px;" width="17" height="18" viewBox="0 0 17 18"><rect x="3.65" y="7.35" width="12.7" height="10" rx="2" fill="none" stroke="#ff5a5f" stroke-width="1.3"/>
<path d="M6.6 7.35 V4 A3.4 3.4 0 0 1 13.4 4 V7.35" fill="none" stroke="#ff5a5f" stroke-width="1.3"/>
<path d="M10 9.6 C10.8 9.6 11.35 10.15 11.35 10.9 C11.35 11.4 11.1 11.8 10.6 12 V14.4 H9.4 V12 C8.9 11.8 8.65 11.4 8.65 10.9 C8.65 10.15 9.2 9.6 10 9.6 Z" fill="#ff5a5f"/></svg>
<svg style="position:absolute;left:491px;top:398px;" width="17" height="18" viewBox="0 0 17 18"><rect x="3.65" y="7.35" width="12.7" height="10" rx="2" fill="none" stroke="#ff5a5f" stroke-width="1.3"/>
<path d="M6.6 7.35 V4 A3.4 3.4 0 0 1 13.4 4 V7.35" fill="none" stroke="#ff5a5f" stroke-width="1.3"/>
<path d="M10 9.6 C10.8 9.6 11.35 10.15 11.35 10.9 C11.35 11.4 11.1 11.8 10.6 12 V14.4 H9.4 V12 C8.9 11.8 8.65 11.4 8.65 10.9 C8.65 10.15 9.2 9.6 10 9.6 Z" fill="#ff5a5f"/></svg>
<svg style="position:absolute;left:562px;top:398px;" width="17" height="18" viewBox="0 0 17 18"><rect x="3.65" y="7.35" width="12.7" height="10" rx="2" fill="none" stroke="#6e6e6e" stroke-width="1.3"/>
<path d="M0.65 4.6 V4 A3.35 3.35 0 0 1 7.35 4 V7.35" fill="none" stroke="#6e6e6e" stroke-width="1.3"/>
<path d="M10 9.6 C10.8 9.6 11.35 10.15 11.35 10.9 C11.35 11.4 11.1 11.8 10.6 12 V14.4 H9.4 V12 C8.9 11.8 8.65 11.4 8.65 10.9 C8.65 10.15 9.2 9.6 10 9.6 Z" fill="#6e6e6e"/></svg>
<svg style="position:absolute;left:632px;top:398px;" width="17" height="18" viewBox="0 0 17 18"><rect x="3.65" y="7.35" width="12.7" height="10" rx="2" fill="none" stroke="#6e6e6e" stroke-width="1.3"/>
<path d="M0.65 4.6 V4 A3.35 3.35 0 0 1 7.35 4 V7.35" fill="none" stroke="#6e6e6e" stroke-width="1.3"/>
<path d="M10 9.6 C10.8 9.6 11.35 10.15 11.35 10.9 C11.35 11.4 11.1 11.8 10.6 12 V14.4 H9.4 V12 C8.9 11.8 8.65 11.4 8.65 10.9 C8.65 10.15 9.2 9.6 10 9.6 Z" fill="#6e6e6e"/></svg>
<svg style="position:absolute;left:701px;top:398px;" width="17" height="18" viewBox="0 0 17 18"><rect x="3.65" y="7.35" width="12.7" height="10" rx="2" fill="none" stroke="#ff5a5f" stroke-width="1.3"/>
<path d="M6.6 7.35 V4 A3.4 3.4 0 0 1 13.4 4 V7.35" fill="none" stroke="#ff5a5f" stroke-width="1.3"/>
<path d="M10 9.6 C10.8 9.6 11.35 10.15 11.35 10.9 C11.35 11.4 11.1 11.8 10.6 12 V14.4 H9.4 V12 C8.9 11.8 8.65 11.4 8.65 10.9 C8.65 10.15 9.2 9.6 10 9.6 Z" fill="#ff5a5f"/></svg>
<svg style="position:absolute;left:772px;top:398px;" width="17" height="18" viewBox="0 0 17 18"><rect x="3.65" y="7.35" width="12.7" height="10" rx="2" fill="none" stroke="#6e6e6e" stroke-width="1.3"/>
<path d="M0.65 4.6 V4 A3.35 3.35 0 0 1 7.35 4 V7.35" fill="none" stroke="#6e6e6e" stroke-width="1.3"/>
<path d="M10 9.6 C10.8 9.6 11.35 10.15 11.35 10.9 C11.35 11.4 11.1 11.8 10.6 12 V14.4 H9.4 V12 C8.9 11.8 8.65 11.4 8.65 10.9 C8.65 10.15 9.2 9.6 10 9.6 Z" fill="#6e6e6e"/></svg>
<svg style="position:absolute;left:842px;top:398px;" width="17" height="18" viewBox="0 0 17 18"><rect x="3.65" y="7.35" width="12.7" height="10" rx="2" fill="none" stroke="#6e6e6e" stroke-width="1.3"/>
<path d="M0.65 4.6 V4 A3.35 3.35 0 0 1 7.35 4 V7.35" fill="none" stroke="#6e6e6e" stroke-width="1.3"/>
<path d="M10 9.6 C10.8 9.6 11.35 10.15 11.35 10.9 C11.35 11.4 11.1 11.8 10.6 12 V14.4 H9.4 V12 C8.9 11.8 8.65 11.4 8.65 10.9 C8.65 10.15 9.2 9.6 10 9.6 Z" fill="#6e6e6e"/></svg>
<svg style="position:absolute;left:991px;top:398px;" width="17" height="18" viewBox="0 0 17 18"><rect x="3.65" y="7.35" width="12.7" height="10" rx="2" fill="none" stroke="#ff5a5f" stroke-width="1.3"/>
<path d="M6.6 7.35 V4 A3.4 3.4 0 0 1 13.4 4 V7.35" fill="none" stroke="#ff5a5f" stroke-width="1.3"/>
<path d="M10 9.6 C10.8 9.6 11.35 10.15 11.35 10.9 C11.35 11.4 11.1 11.8 10.6 12 V14.4 H9.4 V12 C8.9 11.8 8.65 11.4 8.65 10.9 C8.65 10.15 9.2 9.6 10 9.6 Z" fill="#ff5a5f"/></svg>
<svg style="position:absolute;left:1062px;top:398px;" width="17" height="18" viewBox="0 0 17 18"><rect x="3.65" y="7.35" width="12.7" height="10" rx="2" fill="none" stroke="#6e6e6e" stroke-width="1.3"/>
<path d="M0.65 4.6 V4 A3.35 3.35 0 0 1 7.35 4 V7.35" fill="none" stroke="#6e6e6e" stroke-width="1.3"/>
<path d="M10 9.6 C10.8 9.6 11.35 10.15 11.35 10.9 C11.35 11.4 11.1 11.8 10.6 12 V14.4 H9.4 V12 C8.9 11.8 8.65 11.4 8.65 10.9 C8.65 10.15 9.2 9.6 10 9.6 Z" fill="#6e6e6e"/></svg>
<svg style="position:absolute;left:1132px;top:398px;" width="17" height="18" viewBox="0 0 17 18"><rect x="3.65" y="7.35" width="12.7" height="10" rx="2" fill="none" stroke="#6e6e6e" stroke-width="1.3"/>
<path d="M0.65 4.6 V4 A3.35 3.35 0 0 1 7.35 4 V7.35" fill="none" stroke="#6e6e6e" stroke-width="1.3"/>
<path d="M10 9.6 C10.8 9.6 11.35 10.15 11.35 10.9 C11.35 11.4 11.1 11.8 10.6 12 V14.4 H9.4 V12 C8.9 11.8 8.65 11.4 8.65 10.9 C8.65 10.15 9.2 9.6 10 9.6 Z" fill="#6e6e6e"/></svg>
<svg style="position:absolute;left:1216px;top:398px;" width="17" height="18" viewBox="0 0 17 18"><rect x="3.65" y="7.35" width="12.7" height="10" rx="2" fill="none" stroke="#ff5a5f" stroke-width="1.3"/>
<path d="M6.6 7.35 V4 A3.4 3.4 0 0 1 13.4 4 V7.35" fill="none" stroke="#ff5a5f" stroke-width="1.3"/>
<path d="M10 9.6 C10.8 9.6 11.35 10.15 11.35 10.9 C11.35 11.4 11.1 11.8 10.6 12 V14.4 H9.4 V12 C8.9 11.8 8.65 11.4 8.65 10.9 C8.65 10.15 9.2 9.6 10 9.6 Z" fill="#ff5a5f"/></svg>
<svg style="position:absolute;left:491px;top:435px;" width="17" height="18" viewBox="0 0 17 18"><rect x="3.65" y="7.35" width="12.7" height="10" rx="2" fill="none" stroke="#ff5a5f" stroke-width="1.3"/>
<path d="M6.6 7.35 V4 A3.4 3.4 0 0 1 13.4 4 V7.35" fill="none" stroke="#ff5a5f" stroke-width="1.3"/>
<path d="M10 9.6 C10.8 9.6 11.35 10.15 11.35 10.9 C11.35 11.4 11.1 11.8 10.6 12 V14.4 H9.4 V12 C8.9 11.8 8.65 11.4 8.65 10.9 C8.65 10.15 9.2 9.6 10 9.6 Z" fill="#ff5a5f"/></svg>
<svg style="position:absolute;left:562px;top:435px;" width="17" height="18" viewBox="0 0 17 18"><rect x="3.65" y="7.35" width="12.7" height="10" rx="2" fill="none" stroke="#6e6e6e" stroke-width="1.3"/>
<path d="M0.65 4.6 V4 A3.35 3.35 0 0 1 7.35 4 V7.35" fill="none" stroke="#6e6e6e" stroke-width="1.3"/>
<path d="M10 9.6 C10.8 9.6 11.35 10.15 11.35 10.9 C11.35 11.4 11.1 11.8 10.6 12 V14.4 H9.4 V12 C8.9 11.8 8.65 11.4 8.65 10.9 C8.65 10.15 9.2 9.6 10 9.6 Z" fill="#6e6e6e"/></svg>
<svg style="position:absolute;left:632px;top:435px;" width="17" height="18" viewBox="0 0 17 18"><rect x="3.65" y="7.35" width="12.7" height="10" rx="2" fill="none" stroke="#6e6e6e" stroke-width="1.3"/>
<path d="M0.65 4.6 V4 A3.35 3.35 0 0 1 7.35 4 V7.35" fill="none" stroke="#6e6e6e" stroke-width="1.3"/>
<path d="M10 9.6 C10.8 9.6 11.35 10.15 11.35 10.9 C11.35 11.4 11.1 11.8 10.6 12 V14.4 H9.4 V12 C8.9 11.8 8.65 11.4 8.65 10.9 C8.65 10.15 9.2 9.6 10 9.6 Z" fill="#6e6e6e"/></svg>
<svg style="position:absolute;left:701px;top:435px;" width="17" height="18" viewBox="0 0 17 18"><rect x="3.65" y="7.35" width="12.7" height="10" rx="2" fill="none" stroke="#ff5a5f" stroke-width="1.3"/>
<path d="M6.6 7.35 V4 A3.4 3.4 0 0 1 13.4 4 V7.35" fill="none" stroke="#ff5a5f" stroke-width="1.3"/>
<path d="M10 9.6 C10.8 9.6 11.35 10.15 11.35 10.9 C11.35 11.4 11.1 11.8 10.6 12 V14.4 H9.4 V12 C8.9 11.8 8.65 11.4 8.65 10.9 C8.65 10.15 9.2 9.6 10 9.6 Z" fill="#ff5a5f"/></svg>
<svg style="position:absolute;left:772px;top:435px;" width="17" height="18" viewBox="0 0 17 18"><rect x="3.65" y="7.35" width="12.7" height="10" rx="2" fill="none" stroke="#6e6e6e" stroke-width="1.3"/>
<path d="M0.65 4.6 V4 A3.35 3.35 0 0 1 7.35 4 V7.35" fill="none" stroke="#6e6e6e" stroke-width="1.3"/>
<path d="M10 9.6 C10.8 9.6 11.35 10.15 11.35 10.9 C11.35 11.4 11.1 11.8 10.6 12 V14.4 H9.4 V12 C8.9 11.8 8.65 11.4 8.65 10.9 C8.65 10.15 9.2 9.6 10 9.6 Z" fill="#6e6e6e"/></svg>
<svg style="position:absolute;left:842px;top:435px;" width="17" height="18" viewBox="0 0 17 18"><rect x="3.65" y="7.35" width="12.7" height="10" rx="2" fill="none" stroke="#6e6e6e" stroke-width="1.3"/>
<path d="M0.65 4.6 V4 A3.35 3.35 0 0 1 7.35 4 V7.35" fill="none" stroke="#6e6e6e" stroke-width="1.3"/>
<path d="M10 9.6 C10.8 9.6 11.35 10.15 11.35 10.9 C11.35 11.4 11.1 11.8 10.6 12 V14.4 H9.4 V12 C8.9 11.8 8.65 11.4 8.65 10.9 C8.65 10.15 9.2 9.6 10 9.6 Z" fill="#6e6e6e"/></svg>
<svg style="position:absolute;left:991px;top:435px;" width="17" height="18" viewBox="0 0 17 18"><rect x="3.65" y="7.35" width="12.7" height="10" rx="2" fill="none" stroke="#ff5a5f" stroke-width="1.3"/>
<path d="M6.6 7.35 V4 A3.4 3.4 0 0 1 13.4 4 V7.35" fill="none" stroke="#ff5a5f" stroke-width="1.3"/>
<path d="M10 9.6 C10.8 9.6 11.35 10.15 11.35 10.9 C11.35 11.4 11.1 11.8 10.6 12 V14.4 H9.4 V12 C8.9 11.8 8.65 11.4 8.65 10.9 C8.65 10.15 9.2 9.6 10 9.6 Z" fill="#ff5a5f"/></svg>
<svg style="position:absolute;left:1062px;top:435px;" width="17" height="18" viewBox="0 0 17 18"><rect x="3.65" y="7.35" width="12.7" height="10" rx="2" fill="none" stroke="#6e6e6e" stroke-width="1.3"/>
<path d="M0.65 4.6 V4 A3.35 3.35 0 0 1 7.35 4 V7.35" fill="none" stroke="#6e6e6e" stroke-width="1.3"/>
<path d="M10 9.6 C10.8 9.6 11.35 10.15 11.35 10.9 C11.35 11.4 11.1 11.8 10.6 12 V14.4 H9.4 V12 C8.9 11.8 8.65 11.4 8.65 10.9 C8.65 10.15 9.2 9.6 10 9.6 Z" fill="#6e6e6e"/></svg>
<svg style="position:absolute;left:1132px;top:435px;" width="17" height="18" viewBox="0 0 17 18"><rect x="3.65" y="7.35" width="12.7" height="10" rx="2" fill="none" stroke="#6e6e6e" stroke-width="1.3"/>
<path d="M0.65 4.6 V4 A3.35 3.35 0 0 1 7.35 4 V7.35" fill="none" stroke="#6e6e6e" stroke-width="1.3"/>
<path d="M10 9.6 C10.8 9.6 11.35 10.15 11.35 10.9 C11.35 11.4 11.1 11.8 10.6 12 V14.4 H9.4 V12 C8.9 11.8 8.65 11.4 8.65 10.9 C8.65 10.15 9.2 9.6 10 9.6 Z" fill="#6e6e6e"/></svg>
<svg style="position:absolute;left:1216px;top:435px;" width="17" height="18" viewBox="0 0 17 18"><rect x="3.65" y="7.35" width="12.7" height="10" rx="2" fill="none" stroke="#ff5a5f" stroke-width="1.3"/>
<path d="M6.6 7.35 V4 A3.4 3.4 0 0 1 13.4 4 V7.35" fill="none" stroke="#ff5a5f" stroke-width="1.3"/>
<path d="M10 9.6 C10.8 9.6 11.35 10.15 11.35 10.9 C11.35 11.4 11.1 11.8 10.6 12 V14.4 H9.4 V12 C8.9 11.8 8.65 11.4 8.65 10.9 C8.65 10.15 9.2 9.6 10 9.6 Z" fill="#ff5a5f"/></svg>
<svg style="position:absolute;left:491px;top:472px;" width="17" height="18" viewBox="0 0 17 18"><rect x="3.65" y="7.35" width="12.7" height="10" rx="2" fill="none" stroke="#ff5a5f" stroke-width="1.3"/>
<path d="M6.6 7.35 V4 A3.4 3.4 0 0 1 13.4 4 V7.35" fill="none" stroke="#ff5a5f" stroke-width="1.3"/>
<path d="M10 9.6 C10.8 9.6 11.35 10.15 11.35 10.9 C11.35 11.4 11.1 11.8 10.6 12 V14.4 H9.4 V12 C8.9 11.8 8.65 11.4 8.65 10.9 C8.65 10.15 9.2 9.6 10 9.6 Z" fill="#ff5a5f"/></svg>
<svg style="position:absolute;left:562px;top:472px;" width="17" height="18" viewBox="0 0 17 18"><rect x="3.65" y="7.35" width="12.7" height="10" rx="2" fill="none" stroke="#6e6e6e" stroke-width="1.3"/>
<path d="M0.65 4.6 V4 A3.35 3.35 0 0 1 7.35 4 V7.35" fill="none" stroke="#6e6e6e" stroke-width="1.3"/>
<path d="M10 9.6 C10.8 9.6 11.35 10.15 11.35 10.9 C11.35 11.4 11.1 11.8 10.6 12 V14.4 H9.4 V12 C8.9 11.8 8.65 11.4 8.65 10.9 C8.65 10.15 9.2 9.6 10 9.6 Z" fill="#6e6e6e"/></svg>
<svg style="position:absolute;left:632px;top:472px;" width="17" height="18" viewBox="0 0 17 18"><rect x="3.65" y="7.35" width="12.7" height="10" rx="2" fill="none" stroke="#6e6e6e" stroke-width="1.3"/>
<path d="M0.65 4.6 V4 A3.35 3.35 0 0 1 7.35 4 V7.35" fill="none" stroke="#6e6e6e" stroke-width="1.3"/>
<path d="M10 9.6 C10.8 9.6 11.35 10.15 11.35 10.9 C11.35 11.4 11.1 11.8 10.6 12 V14.4 H9.4 V12 C8.9 11.8 8.65 11.4 8.65 10.9 C8.65 10.15 9.2 9.6 10 9.6 Z" fill="#6e6e6e"/></svg>
<svg style="position:absolute;left:701px;top:472px;" width="17" height="18" viewBox="0 0 17 18"><rect x="3.65" y="7.35" width="12.7" height="10" rx="2" fill="none" stroke="#ff5a5f" stroke-width="1.3"/>
<path d="M6.6 7.35 V4 A3.4 3.4 0 0 1 13.4 4 V7.35" fill="none" stroke="#ff5a5f" stroke-width="1.3"/>
<path d="M10 9.6 C10.8 9.6 11.35 10.15 11.35 10.9 C11.35 11.4 11.1 11.8 10.6 12 V14.4 H9.4 V12 C8.9 11.8 8.65 11.4 8.65 10.9 C8.65 10.15 9.2 9.6 10 9.6 Z" fill="#ff5a5f"/></svg>
<svg style="position:absolute;left:772px;top:472px;" width="17" height="18" viewBox="0 0 17 18"><rect x="3.65" y="7.35" width="12.7" height="10" rx="2" fill="none" stroke="#6e6e6e" stroke-width="1.3"/>
<path d="M0.65 4.6 V4 A3.35 3.35 0 0 1 7.35 4 V7.35" fill="none" stroke="#6e6e6e" stroke-width="1.3"/>
<path d="M10 9.6 C10.8 9.6 11.35 10.15 11.35 10.9 C11.35 11.4 11.1 11.8 10.6 12 V14.4 H9.4 V12 C8.9 11.8 8.65 11.4 8.65 10.9 C8.65 10.15 9.2 9.6 10 9.6 Z" fill="#6e6e6e"/></svg>
<svg style="position:absolute;left:842px;top:472px;" width="17" height="18" viewBox="0 0 17 18"><rect x="3.65" y="7.35" width="12.7" height="10" rx="2" fill="none" stroke="#6e6e6e" stroke-width="1.3"/>
<path d="M0.65 4.6 V4 A3.35 3.35 0 0 1 7.35 4 V7.35" fill="none" stroke="#6e6e6e" stroke-width="1.3"/>
<path d="M10 9.6 C10.8 9.6 11.35 10.15 11.35 10.9 C11.35 11.4 11.1 11.8 10.6 12 V14.4 H9.4 V12 C8.9 11.8 8.65 11.4 8.65 10.9 C8.65 10.15 9.2 9.6 10 9.6 Z" fill="#6e6e6e"/></svg>
<svg style="position:absolute;left:991px;top:472px;" width="17" height="18" viewBox="0 0 17 18"><rect x="3.65" y="7.35" width="12.7" height="10" rx="2" fill="none" stroke="#ff5a5f" stroke-width="1.3"/>
<path d="M6.6 7.35 V4 A3.4 3.4 0 0 1 13.4 4 V7.35" fill="none" stroke="#ff5a5f" stroke-width="1.3"/>
<path d="M10 9.6 C10.8 9.6 11.35 10.15 11.35 10.9 C11.35 11.4 11.1 11.8 10.6 12 V14.4 H9.4 V12 C8.9 11.8 8.65 11.4 8.65 10.9 C8.65 10.15 9.2 9.6 10 9.6 Z" fill="#ff5a5f"/></svg>
<svg style="position:absolute;left:1062px;top:472px;" width="17" height="18" viewBox="0 0 17 18"><rect x="3.65" y="7.35" width="12.7" height="10" rx="2" fill="none" stroke="#6e6e6e" stroke-width="1.3"/>
<path d="M0.65 4.6 V4 A3.35 3.35 0 0 1 7.35 4 V7.35" fill="none" stroke="#6e6e6e" stroke-width="1.3"/>
<path d="M10 9.6 C10.8 9.6 11.35 10.15 11.35 10.9 C11.35 11.4 11.1 11.8 10.6 12 V14.4 H9.4 V12 C8.9 11.8 8.65 11.4 8.65 10.9 C8.65 10.15 9.2 9.6 10 9.6 Z" fill="#6e6e6e"/></svg>
<svg style="position:absolute;left:1132px;top:472px;" width="17" height="18" viewBox="0 0 17 18"><rect x="3.65" y="7.35" width="12.7" height="10" rx="2" fill="none" stroke="#6e6e6e" stroke-width="1.3"/>
<path d="M0.65 4.6 V4 A3.35 3.35 0 0 1 7.35 4 V7.35" fill="none" stroke="#6e6e6e" stroke-width="1.3"/>
<path d="M10 9.6 C10.8 9.6 11.35 10.15 11.35 10.9 C11.35 11.4 11.1 11.8 10.6 12 V14.4 H9.4 V12 C8.9 11.8 8.65 11.4 8.65 10.9 C8.65 10.15 9.2 9.6 10 9.6 Z" fill="#6e6e6e"/></svg>
<svg style="position:absolute;left:1216px;top:472px;" width="17" height="18" viewBox="0 0 17 18"><rect x="3.65" y="7.35" width="12.7" height="10" rx="2" fill="none" stroke="#ff5a5f" stroke-width="1.3"/>
<path d="M6.6 7.35 V4 A3.4 3.4 0 0 1 13.4 4 V7.35" fill="none" stroke="#ff5a5f" stroke-width="1.3"/>
<path d="M10 9.6 C10.8 9.6 11.35 10.15 11.35 10.9 C11.35 11.4 11.1 11.8 10.6 12 V14.4 H9.4 V12 C8.9 11.8 8.65 11.4 8.65 10.9 C8.65 10.15 9.2 9.6 10 9.6 Z" fill="#ff5a5f"/></svg>
<svg style="position:absolute;left:491px;top:509px;" width="17" height="18" viewBox="0 0 17 18"><rect x="3.65" y="7.35" width="12.7" height="10" rx="2" fill="none" stroke="#ff5a5f" stroke-width="1.3"/>
<path d="M6.6 7.35 V4 A3.4 3.4 0 0 1 13.4 4 V7.35" fill="none" stroke="#ff5a5f" stroke-width="1.3"/>
<path d="M10 9.6 C10.8 9.6 11.35 10.15 11.35 10.9 C11.35 11.4 11.1 11.8 10.6 12 V14.4 H9.4 V12 C8.9 11.8 8.65 11.4 8.65 10.9 C8.65 10.15 9.2 9.6 10 9.6 Z" fill="#ff5a5f"/></svg>
<svg style="position:absolute;left:562px;top:509px;" width="17" height="18" viewBox="0 0 17 18"><rect x="3.65" y="7.35" width="12.7" height="10" rx="2" fill="none" stroke="#6e6e6e" stroke-width="1.3"/>
<path d="M0.65 4.6 V4 A3.35 3.35 0 0 1 7.35 4 V7.35" fill="none" stroke="#6e6e6e" stroke-width="1.3"/>
<path d="M10 9.6 C10.8 9.6 11.35 10.15 11.35 10.9 C11.35 11.4 11.1 11.8 10.6 12 V14.4 H9.4 V12 C8.9 11.8 8.65 11.4 8.65 10.9 C8.65 10.15 9.2 9.6 10 9.6 Z" fill="#6e6e6e"/></svg>
<svg style="position:absolute;left:632px;top:509px;" width="17" height="18" viewBox="0 0 17 18"><rect x="3.65" y="7.35" width="12.7" height="10" rx="2" fill="none" stroke="#6e6e6e" stroke-width="1.3"/>
<path d="M0.65 4.6 V4 A3.35 3.35 0 0 1 7.35 4 V7.35" fill="none" stroke="#6e6e6e" stroke-width="1.3"/>
<path d="M10 9.6 C10.8 9.6 11.35 10.15 11.35 10.9 C11.35 11.4 11.1 11.8 10.6 12 V14.4 H9.4 V12 C8.9 11.8 8.65 11.4 8.65 10.9 C8.65 10.15 9.2 9.6 10 9.6 Z" fill="#6e6e6e"/></svg>
<svg style="position:absolute;left:701px;top:509px;" width="17" height="18" viewBox="0 0 17 18"><rect x="3.65" y="7.35" width="12.7" height="10" rx="2" fill="none" stroke="#ff5a5f" stroke-width="1.3"/>
<path d="M6.6 7.35 V4 A3.4 3.4 0 0 1 13.4 4 V7.35" fill="none" stroke="#ff5a5f" stroke-width="1.3"/>
<path d="M10 9.6 C10.8 9.6 11.35 10.15 11.35 10.9 C11.35 11.4 11.1 11.8 10.6 12 V14.4 H9.4 V12 C8.9 11.8 8.65 11.4 8.65 10.9 C8.65 10.15 9.2 9.6 10 9.6 Z" fill="#ff5a5f"/></svg>
<svg style="position:absolute;left:772px;top:509px;" width="17" height="18" viewBox="0 0 17 18"><rect x="3.65" y="7.35" width="12.7" height="10" rx="2" fill="none" stroke="#6e6e6e" stroke-width="1.3"/>
<path d="M0.65 4.6 V4 A3.35 3.35 0 0 1 7.35 4 V7.35" fill="none" stroke="#6e6e6e" stroke-width="1.3"/>
<path d="M10 9.6 C10.8 9.6 11.35 10.15 11.35 10.9 C11.35 11.4 11.1 11.8 10.6 12 V14.4 H9.4 V12 C8.9 11.8 8.65 11.4 8.65 10.9 C8.65 10.15 9.2 9.6 10 9.6 Z" fill="#6e6e6e"/></svg>
<svg style="position:absolute;left:842px;top:509px;" width="17" height="18" viewBox="0 0 17 18"><rect x="3.65" y="7.35" width="12.7" height="10" rx="2" fill="none" stroke="#6e6e6e" stroke-width="1.3"/>
<path d="M0.65 4.6 V4 A3.35 3.35 0 0 1 7.35 4 V7.35" fill="none" stroke="#6e6e6e" stroke-width="1.3"/>
<path d="M10 9.6 C10.8 9.6 11.35 10.15 11.35 10.9 C11.35 11.4 11.1 11.8 10.6 12 V14.4 H9.4 V12 C8.9 11.8 8.65 11.4 8.65 10.9 C8.65 10.15 9.2 9.6 10 9.6 Z" fill="#6e6e6e"/></svg>
<svg style="position:absolute;left:991px;top:509px;" width="17" height="18" viewBox="0 0 17 18"><rect x="3.65" y="7.35" width="12.7" height="10" rx="2" fill="none" stroke="#ff5a5f" stroke-width="1.3"/>
<path d="M6.6 7.35 V4 A3.4 3.4 0 0 1 13.4 4 V7.35" fill="none" stroke="#ff5a5f" stroke-width="1.3"/>
<path d="M10 9.6 C10.8 9.6 11.35 10.15 11.35 10.9 C11.35 11.4 11.1 11.8 10.6 12 V14.4 H9.4 V12 C8.9 11.8 8.65 11.4 8.65 10.9 C8.65 10.15 9.2 9.6 10 9.6 Z" fill="#ff5a5f"/></svg>
<svg style="position:absolute;left:1062px;top:509px;" width="17" height="18" viewBox="0 0 17 18"><rect x="3.65" y="7.35" width="12.7" height="10" rx="2" fill="none" stroke="#6e6e6e" stroke-width="1.3"/>
<path d="M0.65 4.6 V4 A3.35 3.35 0 0 1 7.35 4 V7.35" fill="none" stroke="#6e6e6e" stroke-width="1.3"/>
<path d="M10 9.6 C10.8 9.6 11.35 10.15 11.35 10.9 C11.35 11.4 11.1 11.8 10.6 12 V14.4 H9.4 V12 C8.9 11.8 8.65 11.4 8.65 10.9 C8.65 10.15 9.2 9.6 10 9.6 Z" fill="#6e6e6e"/></svg>
<svg style="position:absolute;left:1132px;top:509px;" width="17" height="18" viewBox="0 0 17 18"><rect x="3.65" y="7.35" width="12.7" height="10" rx="2" fill="none" stroke="#6e6e6e" stroke-width="1.3"/>
<path d="M0.65 4.6 V4 A3.35 3.35 0 0 1 7.35 4 V7.35" fill="none" stroke="#6e6e6e" stroke-width="1.3"/>
<path d="M10 9.6 C10.8 9.6 11.35 10.15 11.35 10.9 C11.35 11.4 11.1 11.8 10.6 12 V14.4 H9.4 V12 C8.9 11.8 8.65 11.4 8.65 10.9 C8.65 10.15 9.2 9.6 10 9.6 Z" fill="#6e6e6e"/></svg>
<svg style="position:absolute;left:1216px;top:509px;" width="17" height="18" viewBox="0 0 17 18"><rect x="3.65" y="7.35" width="12.7" height="10" rx="2" fill="none" stroke="#ff5a5f" stroke-width="1.3"/>
<path d="M6.6 7.35 V4 A3.4 3.4 0 0 1 13.4 4 V7.35" fill="none" stroke="#ff5a5f" stroke-width="1.3"/>
<path d="M10 9.6 C10.8 9.6 11.35 10.15 11.35 10.9 C11.35 11.4 11.1 11.8 10.6 12 V14.4 H9.4 V12 C8.9 11.8 8.65 11.4 8.65 10.9 C8.65 10.15 9.2 9.6 10 9.6 Z" fill="#ff5a5f"/></svg>
<svg style="position:absolute;left:491px;top:546px;" width="17" height="18" viewBox="0 0 17 18"><rect x="3.65" y="7.35" width="12.7" height="10" rx="2" fill="none" stroke="#ff5a5f" stroke-width="1.3"/>
<path d="M6.6 7.35 V4 A3.4 3.4 0 0 1 13.4 4 V7.35" fill="none" stroke="#ff5a5f" stroke-width="1.3"/>
<path d="M10 9.6 C10.8 9.6 11.35 10.15 11.35 10.9 C11.35 11.4 11.1 11.8 10.6 12 V14.4 H9.4 V12 C8.9 11.8 8.65 11.4 8.65 10.9 C8.65 10.15 9.2 9.6 10 9.6 Z" fill="#ff5a5f"/></svg>
<svg style="position:absolute;left:562px;top:546px;" width="17" height="18" viewBox="0 0 17 18"><rect x="3.65" y="7.35" width="12.7" height="10" rx="2" fill="none" stroke="#6e6e6e" stroke-width="1.3"/>
<path d="M0.65 4.6 V4 A3.35 3.35 0 0 1 7.35 4 V7.35" fill="none" stroke="#6e6e6e" stroke-width="1.3"/>
<path d="M10 9.6 C10.8 9.6 11.35 10.15 11.35 10.9 C11.35 11.4 11.1 11.8 10.6 12 V14.4 H9.4 V12 C8.9 11.8 8.65 11.4 8.65 10.9 C8.65 10.15 9.2 9.6 10 9.6 Z" fill="#6e6e6e"/></svg>
<svg style="position:absolute;left:632px;top:546px;" width="17" height="18" viewBox="0 0 17 18"><rect x="3.65" y="7.35" width="12.7" height="10" rx="2" fill="none" stroke="#6e6e6e" stroke-width="1.3"/>
<path d="M0.65 4.6 V4 A3.35 3.35 0 0 1 7.35 4 V7.35" fill="none" stroke="#6e6e6e" stroke-width="1.3"/>
<path d="M10 9.6 C10.8 9.6 11.35 10.15 11.35 10.9 C11.35 11.4 11.1 11.8 10.6 12 V14.4 H9.4 V12 C8.9 11.8 8.65 11.4 8.65 10.9 C8.65 10.15 9.2 9.6 10 9.6 Z" fill="#6e6e6e"/></svg>
<svg style="position:absolute;left:701px;top:546px;" width="17" height="18" viewBox="0 0 17 18"><rect x="3.65" y="7.35" width="12.7" height="10" rx="2" fill="none" stroke="#ff5a5f" stroke-width="1.3"/>
<path d="M6.6 7.35 V4 A3.4 3.4 0 0 1 13.4 4 V7.35" fill="none" stroke="#ff5a5f" stroke-width="1.3"/>
<path d="M10 9.6 C10.8 9.6 11.35 10.15 11.35 10.9 C11.35 11.4 11.1 11.8 10.6 12 V14.4 H9.4 V12 C8.9 11.8 8.65 11.4 8.65 10.9 C8.65 10.15 9.2 9.6 10 9.6 Z" fill="#ff5a5f"/></svg>
<svg style="position:absolute;left:772px;top:546px;" width="17" height="18" viewBox="0 0 17 18"><rect x="3.65" y="7.35" width="12.7" height="10" rx="2" fill="none" stroke="#6e6e6e" stroke-width="1.3"/>
<path d="M0.65 4.6 V4 A3.35 3.35 0 0 1 7.35 4 V7.35" fill="none" stroke="#6e6e6e" stroke-width="1.3"/>
<path d="M10 9.6 C10.8 9.6 11.35 10.15 11.35 10.9 C11.35 11.4 11.1 11.8 10.6 12 V14.4 H9.4 V12 C8.9 11.8 8.65 11.4 8.65 10.9 C8.65 10.15 9.2 9.6 10 9.6 Z" fill="#6e6e6e"/></svg>
<svg style="position:absolute;left:842px;top:546px;" width="17" height="18" viewBox="0 0 17 18"><rect x="3.65" y="7.35" width="12.7" height="10" rx="2" fill="none" stroke="#6e6e6e" stroke-width="1.3"/>
<path d="M0.65 4.6 V4 A3.35 3.35 0 0 1 7.35 4 V7.35" fill="none" stroke="#6e6e6e" stroke-width="1.3"/>
<path d="M10 9.6 C10.8 9.6 11.35 10.15 11.35 10.9 C11.35 11.4 11.1 11.8 10.6 12 V14.4 H9.4 V12 C8.9 11.8 8.65 11.4 8.65 10.9 C8.65 10.15 9.2 9.6 10 9.6 Z" fill="#6e6e6e"/></svg>
<svg style="position:absolute;left:991px;top:546px;" width="17" height="18" viewBox="0 0 17 18"><rect x="3.65" y="7.35" width="12.7" height="10" rx="2" fill="none" stroke="#ff5a5f" stroke-width="1.3"/>
<path d="M6.6 7.35 V4 A3.4 3.4 0 0 1 13.4 4 V7.35" fill="none" stroke="#ff5a5f" stroke-width="1.3"/>
<path d="M10 9.6 C10.8 9.6 11.35 10.15 11.35 10.9 C11.35 11.4 11.1 11.8 10.6 12 V14.4 H9.4 V12 C8.9 11.8 8.65 11.4 8.65 10.9 C8.65 10.15 9.2 9.6 10 9.6 Z" fill="#ff5a5f"/></svg>
<svg style="position:absolute;left:1062px;top:546px;" width="17" height="18" viewBox="0 0 17 18"><rect x="3.65" y="7.35" width="12.7" height="10" rx="2" fill="none" stroke="#6e6e6e" stroke-width="1.3"/>
<path d="M0.65 4.6 V4 A3.35 3.35 0 0 1 7.35 4 V7.35" fill="none" stroke="#6e6e6e" stroke-width="1.3"/>
<path d="M10 9.6 C10.8 9.6 11.35 10.15 11.35 10.9 C11.35 11.4 11.1 11.8 10.6 12 V14.4 H9.4 V12 C8.9 11.8 8.65 11.4 8.65 10.9 C8.65 10.15 9.2 9.6 10 9.6 Z" fill="#6e6e6e"/></svg>
<svg style="position:absolute;left:1132px;top:546px;" width="17" height="18" viewBox="0 0 17 18"><rect x="3.65" y="7.35" width="12.7" height="10" rx="2" fill="none" stroke="#6e6e6e" stroke-width="1.3"/>
<path d="M0.65 4.6 V4 A3.35 3.35 0 0 1 7.35 4 V7.35" fill="none" stroke="#6e6e6e" stroke-width="1.3"/>
<path d="M10 9.6 C10.8 9.6 11.35 10.15 11.35 10.9 C11.35 11.4 11.1 11.8 10.6 12 V14.4 H9.4 V12 C8.9 11.8 8.65 11.4 8.65 10.9 C8.65 10.15 9.2 9.6 10 9.6 Z" fill="#6e6e6e"/></svg>
<svg style="position:absolute;left:1216px;top:546px;" width="17" height="18" viewBox="0 0 17 18"><rect x="3.65" y="7.35" width="12.7" height="10" rx="2" fill="none" stroke="#ff5a5f" stroke-width="1.3"/>
<path d="M6.6 7.35 V4 A3.4 3.4 0 0 1 13.4 4 V7.35" fill="none" stroke="#ff5a5f" stroke-width="1.3"/>
<path d="M10 9.6 C10.8 9.6 11.35 10.15 11.35 10.9 C11.35 11.4 11.1 11.8 10.6 12 V14.4 H9.4 V12 C8.9 11.8 8.65 11.4 8.65 10.9 C8.65 10.15 9.2 9.6 10 9.6 Z" fill="#ff5a5f"/></svg>
<svg style="position:absolute;left:491px;top:583px;" width="17" height="18" viewBox="0 0 17 18"><rect x="3.65" y="7.35" width="12.7" height="10" rx="2" fill="none" stroke="#ff5a5f" stroke-width="1.3"/>
<path d="M6.6 7.35 V4 A3.4 3.4 0 0 1 13.4 4 V7.35" fill="none" stroke="#ff5a5f" stroke-width="1.3"/>
<path d="M10 9.6 C10.8 9.6 11.35 10.15 11.35 10.9 C11.35 11.4 11.1 11.8 10.6 12 V14.4 H9.4 V12 C8.9 11.8 8.65 11.4 8.65 10.9 C8.65 10.15 9.2 9.6 10 9.6 Z" fill="#ff5a5f"/></svg>
<svg style="position:absolute;left:632px;top:583px;" width="17" height="18" viewBox="0 0 17 18"><rect x="3.65" y="7.35" width="12.7" height="10" rx="2" fill="none" stroke="#6e6e6e" stroke-width="1.3"/>
<path d="M0.65 4.6 V4 A3.35 3.35 0 0 1 7.35 4 V7.35" fill="none" stroke="#6e6e6e" stroke-width="1.3"/>
<path d="M10 9.6 C10.8 9.6 11.35 10.15 11.35 10.9 C11.35 11.4 11.1 11.8 10.6 12 V14.4 H9.4 V12 C8.9 11.8 8.65 11.4 8.65 10.9 C8.65 10.15 9.2 9.6 10 9.6 Z" fill="#6e6e6e"/></svg>
<svg style="position:absolute;left:701px;top:583px;" width="17" height="18" viewBox="0 0 17 18"><rect x="3.65" y="7.35" width="12.7" height="10" rx="2" fill="none" stroke="#ff5a5f" stroke-width="1.3"/>
<path d="M6.6 7.35 V4 A3.4 3.4 0 0 1 13.4 4 V7.35" fill="none" stroke="#ff5a5f" stroke-width="1.3"/>
<path d="M10 9.6 C10.8 9.6 11.35 10.15 11.35 10.9 C11.35 11.4 11.1 11.8 10.6 12 V14.4 H9.4 V12 C8.9 11.8 8.65 11.4 8.65 10.9 C8.65 10.15 9.2 9.6 10 9.6 Z" fill="#ff5a5f"/></svg>
<svg style="position:absolute;left:842px;top:583px;" width="17" height="18" viewBox="0 0 17 18"><rect x="3.65" y="7.35" width="12.7" height="10" rx="2" fill="none" stroke="#6e6e6e" stroke-width="1.3"/>
<path d="M0.65 4.6 V4 A3.35 3.35 0 0 1 7.35 4 V7.35" fill="none" stroke="#6e6e6e" stroke-width="1.3"/>
<path d="M10 9.6 C10.8 9.6 11.35 10.15 11.35 10.9 C11.35 11.4 11.1 11.8 10.6 12 V14.4 H9.4 V12 C8.9 11.8 8.65 11.4 8.65 10.9 C8.65 10.15 9.2 9.6 10 9.6 Z" fill="#6e6e6e"/></svg>
<svg style="position:absolute;left:991px;top:583px;" width="17" height="18" viewBox="0 0 17 18"><rect x="3.65" y="7.35" width="12.7" height="10" rx="2" fill="none" stroke="#ff5a5f" stroke-width="1.3"/>
<path d="M6.6 7.35 V4 A3.4 3.4 0 0 1 13.4 4 V7.35" fill="none" stroke="#ff5a5f" stroke-width="1.3"/>
<path d="M10 9.6 C10.8 9.6 11.35 10.15 11.35 10.9 C11.35 11.4 11.1 11.8 10.6 12 V14.4 H9.4 V12 C8.9 11.8 8.65 11.4 8.65 10.9 C8.65 10.15 9.2 9.6 10 9.6 Z" fill="#ff5a5f"/></svg>
<svg style="position:absolute;left:1132px;top:583px;" width="17" height="18" viewBox="0 0 17 18"><rect x="3.65" y="7.35" width="12.7" height="10" rx="2" fill="none" stroke="#6e6e6e" stroke-width="1.3"/>
<path d="M0.65 4.6 V4 A3.35 3.35 0 0 1 7.35 4 V7.35" fill="none" stroke="#6e6e6e" stroke-width="1.3"/>
<path d="M10 9.6 C10.8 9.6 11.35 10.15 11.35 10.9 C11.35 11.4 11.1 11.8 10.6 12 V14.4 H9.4 V12 C8.9 11.8 8.65 11.4 8.65 10.9 C8.65 10.15 9.2 9.6 10 9.6 Z" fill="#6e6e6e"/></svg>
<svg style="position:absolute;left:1216px;top:583px;" width="17" height="18" viewBox="0 0 17 18"><rect x="3.65" y="7.35" width="12.7" height="10" rx="2" fill="none" stroke="#ff5a5f" stroke-width="1.3"/>
<path d="M6.6 7.35 V4 A3.4 3.4 0 0 1 13.4 4 V7.35" fill="none" stroke="#ff5a5f" stroke-width="1.3"/>
<path d="M10 9.6 C10.8 9.6 11.35 10.15 11.35 10.9 C11.35 11.4 11.1 11.8 10.6 12 V14.4 H9.4 V12 C8.9 11.8 8.65 11.4 8.65 10.9 C8.65 10.15 9.2 9.6 10 9.6 Z" fill="#ff5a5f"/></svg>
<svg style="position:absolute;left:491px;top:620px;" width="17" height="18" viewBox="0 0 17 18"><rect x="3.65" y="7.35" width="12.7" height="10" rx="2" fill="none" stroke="#ff5a5f" stroke-width="1.3"/>
<path d="M6.6 7.35 V4 A3.4 3.4 0 0 1 13.4 4 V7.35" fill="none" stroke="#ff5a5f" stroke-width="1.3"/>
<path d="M10 9.6 C10.8 9.6 11.35 10.15 11.35 10.9 C11.35 11.4 11.1 11.8 10.6 12 V14.4 H9.4 V12 C8.9 11.8 8.65 11.4 8.65 10.9 C8.65 10.15 9.2 9.6 10 9.6 Z" fill="#ff5a5f"/></svg>
<svg style="position:absolute;left:632px;top:620px;" width="17" height="18" viewBox="0 0 17 18"><rect x="3.65" y="7.35" width="12.7" height="10" rx="2" fill="none" stroke="#6e6e6e" stroke-width="1.3"/>
<path d="M0.65 4.6 V4 A3.35 3.35 0 0 1 7.35 4 V7.35" fill="none" stroke="#6e6e6e" stroke-width="1.3"/>
<path d="M10 9.6 C10.8 9.6 11.35 10.15 11.35 10.9 C11.35 11.4 11.1 11.8 10.6 12 V14.4 H9.4 V12 C8.9 11.8 8.65 11.4 8.65 10.9 C8.65 10.15 9.2 9.6 10 9.6 Z" fill="#6e6e6e"/></svg>
<svg style="position:absolute;left:701px;top:620px;" width="17" height="18" viewBox="0 0 17 18"><rect x="3.65" y="7.35" width="12.7" height="10" rx="2" fill="none" stroke="#ff5a5f" stroke-width="1.3"/>
<path d="M6.6 7.35 V4 A3.4 3.4 0 0 1 13.4 4 V7.35" fill="none" stroke="#ff5a5f" stroke-width="1.3"/>
<path d="M10 9.6 C10.8 9.6 11.35 10.15 11.35 10.9 C11.35 11.4 11.1 11.8 10.6 12 V14.4 H9.4 V12 C8.9 11.8 8.65 11.4 8.65 10.9 C8.65 10.15 9.2 9.6 10 9.6 Z" fill="#ff5a5f"/></svg>
<svg style="position:absolute;left:842px;top:620px;" width="17" height="18" viewBox="0 0 17 18"><rect x="3.65" y="7.35" width="12.7" height="10" rx="2" fill="none" stroke="#6e6e6e" stroke-width="1.3"/>
<path d="M0.65 4.6 V4 A3.35 3.35 0 0 1 7.35 4 V7.35" fill="none" stroke="#6e6e6e" stroke-width="1.3"/>
<path d="M10 9.6 C10.8 9.6 11.35 10.15 11.35 10.9 C11.35 11.4 11.1 11.8 10.6 12 V14.4 H9.4 V12 C8.9 11.8 8.65 11.4 8.65 10.9 C8.65 10.15 9.2 9.6 10 9.6 Z" fill="#6e6e6e"/></svg>
<svg style="position:absolute;left:991px;top:620px;" width="17" height="18" viewBox="0 0 17 18"><rect x="3.65" y="7.35" width="12.7" height="10" rx="2" fill="none" stroke="#ff5a5f" stroke-width="1.3"/>
<path d="M6.6 7.35 V4 A3.4 3.4 0 0 1 13.4 4 V7.35" fill="none" stroke="#ff5a5f" stroke-width="1.3"/>
<path d="M10 9.6 C10.8 9.6 11.35 10.15 11.35 10.9 C11.35 11.4 11.1 11.8 10.6 12 V14.4 H9.4 V12 C8.9 11.8 8.65 11.4 8.65 10.9 C8.65 10.15 9.2 9.6 10 9.6 Z" fill="#ff5a5f"/></svg>
<svg style="position:absolute;left:1132px;top:620px;" width="17" height="18" viewBox="0 0 17 18"><rect x="3.65" y="7.35" width="12.7" height="10" rx="2" fill="none" stroke="#6e6e6e" stroke-width="1.3"/>
<path d="M0.65 4.6 V4 A3.35 3.35 0 0 1 7.35 4 V7.35" fill="none" stroke="#6e6e6e" stroke-width="1.3"/>
<path d="M10 9.6 C10.8 9.6 11.35 10.15 11.35 10.9 C11.35 11.4 11.1 11.8 10.6 12 V14.4 H9.4 V12 C8.9 11.8 8.65 11.4 8.65 10.9 C8.65 10.15 9.2 9.6 10 9.6 Z" fill="#6e6e6e"/></svg>
<svg style="position:absolute;left:1216px;top:620px;" width="17" height="18" viewBox="0 0 17 18"><rect x="3.65" y="7.35" width="12.7" height="10" rx="2" fill="none" stroke="#ff5a5f" stroke-width="1.3"/>
<path d="M6.6 7.35 V4 A3.4 3.4 0 0 1 13.4 4 V7.35" fill="none" stroke="#ff5a5f" stroke-width="1.3"/>
<path d="M10 9.6 C10.8 9.6 11.35 10.15 11.35 10.9 C11.35 11.4 11.1 11.8 10.6 12 V14.4 H9.4 V12 C8.9 11.8 8.65 11.4 8.65 10.9 C8.65 10.15 9.2 9.6 10 9.6 Z" fill="#ff5a5f"/></svg>
<div style="position:absolute;left:917px;top:657px;width:17px;height:9px;overflow:hidden;">
<svg style="position:absolute;left:0;top:0" width="17" height="18" viewBox="0 0 17 18"><path d="M0.65 4.6 V4 A3.35 3.35 0 0 1 7.35 4 V7.35" fill="none" stroke="#6e6e6e" stroke-width="1.3"/></svg>
</div>
<div style="position:absolute;left:465px;top:659px;width:798px;height:8px;background:#e9e9e9;"></div>
<div style="position:absolute;left:612px;top:659px;width:489px;height:8px;border-radius:4px;background:#a9a9a9;"></div>
<div style="position:absolute;left:1263px;top:240px;width:8px;height:419px;background:#e9e9e9;"></div>
<div style="position:absolute;left:1263px;top:240px;width:8px;height:395px;border-radius:4px;background:#a9a9a9;"></div>
<div style="position:absolute;left:1263px;top:659px;width:8px;height:8px;background:#fff;"></div>
<div style="position:absolute;top:114.00px;font-size:13.2px;line-height:13.2px;color:#1a1a1a;font-weight:400;white-space:nowrap;left:469.20px;width:200px;text-align:center;-webkit-text-stroke:0.45px #1a1a1a;">Giữa kỳ I</div>
<svg style="position:absolute;left:563.2px;top:134px;" width="11" height="8" viewBox="0 0 11 8"><path d="M1.3 1.5 L5.5 5.7 L9.7 1.5" fill="none" stroke="#222" stroke-width="1.3"/></svg>
<div style="position:absolute;top:114.00px;font-size:13.2px;line-height:13.2px;color:#1a1a1a;font-weight:400;white-space:nowrap;left:719.00px;width:200px;text-align:center;-webkit-text-stroke:0.45px #1a1a1a;">Học kỳ I</div>
<svg style="position:absolute;left:813.0px;top:134px;" width="11" height="8" viewBox="0 0 11 8"><path d="M1.3 1.5 L5.5 5.7 L9.7 1.5" fill="none" stroke="#222" stroke-width="1.3"/></svg>
<div style="position:absolute;top:114.00px;font-size:13.2px;line-height:13.2px;color:#1a1a1a;font-weight:400;white-space:nowrap;left:968.90px;width:200px;text-align:center;-webkit-text-stroke:0.45px #1a1a1a;">Giữa kỳ II</div>
<svg style="position:absolute;left:1062.9px;top:134px;" width="11" height="8" viewBox="0 0 11 8"><path d="M1.3 1.5 L5.5 5.7 L9.7 1.5" fill="none" stroke="#222" stroke-width="1.3"/></svg>
<div style="position:absolute;top:173.00px;font-size:13.2px;line-height:13.2px;color:#1a1a1a;font-weight:400;white-space:nowrap;left:399.30px;width:200px;text-align:center;-webkit-text-stroke:0.45px #1a1a1a;">Mức đạt</div>
<div style="position:absolute;top:191.00px;font-size:13.2px;line-height:13.2px;color:#1a1a1a;font-weight:400;white-space:nowrap;left:399.30px;width:200px;text-align:center;-webkit-text-stroke:0.45px #1a1a1a;">được</div>
<svg style="position:absolute;left:494.0px;top:211px;" width="11" height="8" viewBox="0 0 11 8"><path d="M1.3 1.5 L5.5 5.7 L9.7 1.5" fill="none" stroke="#222" stroke-width="1.3"/></svg>
<div style="position:absolute;top:173.00px;font-size:13.2px;line-height:13.2px;color:#1a1a1a;font-weight:400;white-space:nowrap;left:470.30px;width:200px;text-align:center;-webkit-text-stroke:0.45px #1a1a1a;">Điểm</div>
<svg style="position:absolute;left:565.0px;top:211px;" width="11" height="8" viewBox="0 0 11 8"><path d="M1.3 1.5 L5.5 5.7 L9.7 1.5" fill="none" stroke="#222" stroke-width="1.3"/></svg>
<div style="position:absolute;top:164.00px;font-size:13.2px;line-height:13.2px;color:#1a1a1a;font-weight:400;white-space:nowrap;left:539.80px;width:200px;text-align:center;-webkit-text-stroke:0.45px #1a1a1a;">Nhận</div>
<div style="position:absolute;top:182.00px;font-size:13.2px;line-height:13.2px;color:#1a1a1a;font-weight:400;white-space:nowrap;left:539.80px;width:200px;text-align:center;-webkit-text-stroke:0.45px #1a1a1a;">Xét</div>
<svg style="position:absolute;left:634.5px;top:220px;" width="11" height="8" viewBox="0 0 11 8"><path d="M1.3 1.5 L5.5 5.7 L9.7 1.5" fill="none" stroke="#222" stroke-width="1.3"/></svg>
<div style="position:absolute;top:173.00px;font-size:13.2px;line-height:13.2px;color:#1a1a1a;font-weight:400;white-space:nowrap;left:609.80px;width:200px;text-align:center;-webkit-text-stroke:0.45px #1a1a1a;">Mức đạt</div>
<div style="position:absolute;top:191.00px;font-size:13.2px;line-height:13.2px;color:#1a1a1a;font-weight:400;white-space:nowrap;left:609.80px;width:200px;text-align:center;-webkit-text-stroke:0.45px #1a1a1a;">được</div>
<svg style="position:absolute;left:704.5px;top:211px;" width="11" height="8" viewBox="0 0 11 8"><path d="M1.3 1.5 L5.5 5.7 L9.7 1.5" fill="none" stroke="#222" stroke-width="1.3"/></svg>
<div style="position:absolute;top:173.00px;font-size:13.2px;line-height:13.2px;color:#1a1a1a;font-weight:400;white-space:nowrap;left:680.30px;width:200px;text-align:center;-webkit-text-stroke:0.45px #1a1a1a;">Điểm</div>
<svg style="position:absolute;left:775.0px;top:211px;" width="11" height="8" viewBox="0 0 11 8"><path d="M1.3 1.5 L5.5 5.7 L9.7 1.5" fill="none" stroke="#222" stroke-width="1.3"/></svg>
<div style="position:absolute;top:164.00px;font-size:13.2px;line-height:13.2px;color:#1a1a1a;font-weight:400;white-space:nowrap;left:750.30px;width:200px;text-align:center;-webkit-text-stroke:0.45px #1a1a1a;">Nhận</div>
<div style="position:absolute;top:182.00px;font-size:13.2px;line-height:13.2px;color:#1a1a1a;font-weight:400;white-space:nowrap;left:750.30px;width:200px;text-align:center;-webkit-text-stroke:0.45px #1a1a1a;">xét</div>
<svg style="position:absolute;left:845.0px;top:220px;" width="11" height="8" viewBox="0 0 11 8"><path d="M1.3 1.5 L5.5 5.7 L9.7 1.5" fill="none" stroke="#222" stroke-width="1.3"/></svg>
<div style="position:absolute;top:173.00px;font-size:13.2px;line-height:13.2px;color:#1a1a1a;font-weight:400;white-space:nowrap;left:824.80px;width:200px;text-align:center;-webkit-text-stroke:0.45px #1a1a1a;">Đánh giá</div>
<svg style="position:absolute;left:919.5px;top:211px;" width="11" height="8" viewBox="0 0 11 8"><path d="M1.3 1.5 L5.5 5.7 L9.7 1.5" fill="none" stroke="#222" stroke-width="1.3"/></svg>
<div style="position:absolute;top:173.00px;font-size:13.2px;line-height:13.2px;color:#1a1a1a;font-weight:400;white-space:nowrap;left:899.80px;width:200px;text-align:center;-webkit-text-stroke:0.45px #1a1a1a;">Mức đạt</div>
<div style="position:absolute;top:191.00px;font-size:13.2px;line-height:13.2px;color:#1a1a1a;font-weight:400;white-space:nowrap;left:899.80px;width:200px;text-align:center;-webkit-text-stroke:0.45px #1a1a1a;">được</div>
<svg style="position:absolute;left:994.5px;top:211px;" width="11" height="8" viewBox="0 0 11 8"><path d="M1.3 1.5 L5.5 5.7 L9.7 1.5" fill="none" stroke="#222" stroke-width="1.3"/></svg>
<div style="position:absolute;top:173.00px;font-size:13.2px;line-height:13.2px;color:#1a1a1a;font-weight:400;white-space:nowrap;left:970.30px;width:200px;text-align:center;-webkit-text-stroke:0.45px #1a1a1a;">Điểm</div>
<svg style="position:absolute;left:1065.0px;top:211px;" width="11" height="8" viewBox="0 0 11 8"><path d="M1.3 1.5 L5.5 5.7 L9.7 1.5" fill="none" stroke="#222" stroke-width="1.3"/></svg>
<div style="position:absolute;top:164.00px;font-size:13.2px;line-height:13.2px;color:#1a1a1a;font-weight:400;white-space:nowrap;left:1040.30px;width:200px;text-align:center;-webkit-text-stroke:0.45px #1a1a1a;">Nhận</div>
<div style="position:absolute;top:182.00px;font-size:13.2px;line-height:13.2px;color:#1a1a1a;font-weight:400;white-space:nowrap;left:1040.30px;width:200px;text-align:center;-webkit-text-stroke:0.45px #1a1a1a;">xét</div>
<svg style="position:absolute;left:1135.0px;top:220px;" width="11" height="8" viewBox="0 0 11 8"><path d="M1.3 1.5 L5.5 5.7 L9.7 1.5" fill="none" stroke="#222" stroke-width="1.3"/></svg>
<div style="position:absolute;top:173.00px;font-size:13.2px;line-height:13.2px;color:#1a1a1a;font-weight:400;white-space:nowrap;left:1124.50px;width:200px;text-align:center;-webkit-text-stroke:0.45px #1a1a1a;">Mức đạt</div>
<div style="position:absolute;top:191.00px;font-size:13.2px;line-height:13.2px;color:#1a1a1a;font-weight:400;white-space:nowrap;left:1124.50px;width:200px;text-align:center;-webkit-text-stroke:0.45px #1a1a1a;">được</div>
<svg style="position:absolute;left:1218.5px;top:211px;" width="11" height="8" viewBox="0 0 11 8"><path d="M1.3 1.5 L5.5 5.7 L9.7 1.5" fill="none" stroke="#222" stroke-width="1.3"/></svg>
</body></html>
